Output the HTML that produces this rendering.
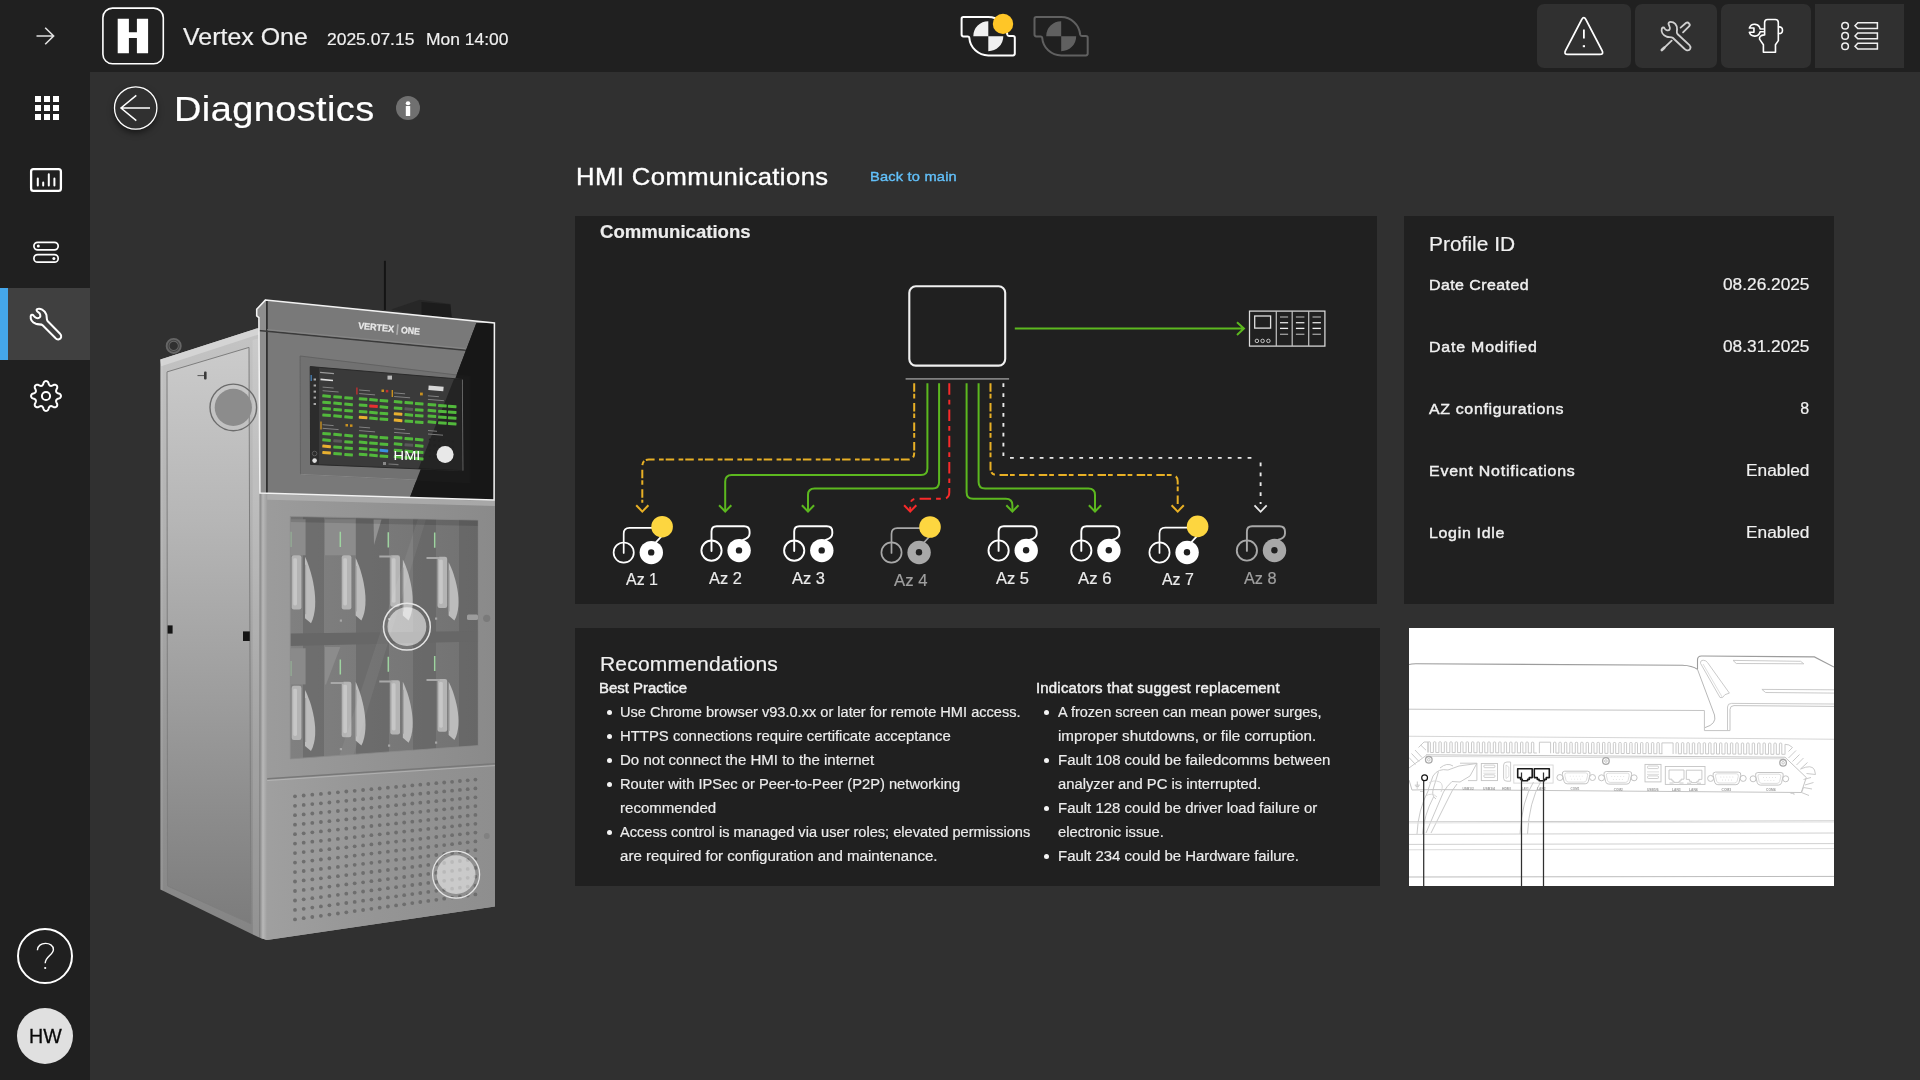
<!DOCTYPE html>
<html><head><meta charset="utf-8"><title>Diagnostics</title>
<style>
html,body{margin:0;padding:0;}
body{width:1920px;height:1080px;overflow:hidden;background:#303030;font-family:"Liberation Sans",sans-serif;position:relative;}
.t{position:absolute;white-space:pre;line-height:1;transform-origin:0 0;-webkit-text-stroke:0.18px currentColor;font-family:"Liberation Sans",sans-serif;}
.abs{position:absolute;}
#side{left:0;top:0;width:90px;height:1080px;background:#202020;}
#top{left:90px;top:0;width:1830px;height:72px;background:#202020;}
.panel{position:absolute;background:#202020;}
svg{position:absolute;overflow:visible;}
.bul{position:absolute;width:5.6px;height:5.6px;border-radius:50%;background:#f4f4f4;}
</style></head><body>
<div id="side" class="abs"></div>
<div id="top" class="abs"></div>
<div class="panel" style="left:575px;top:216px;width:802px;height:388px;"></div>
<div class="panel" style="left:1404px;top:216px;width:430px;height:388px;"></div>
<div class="panel" style="left:575px;top:628px;width:805px;height:258px;"></div>
<div class="abs" style="left:1409px;top:628px;width:425px;height:258px;background:#ffffff;"></div>

<div class="abs" style="left:0;top:288px;width:90px;height:72px;background:#404040;"></div>
<div class="abs" style="left:0;top:288px;width:8px;height:72px;background:#45a7ea;"></div>
<svg width="90" height="1080" style="left:0;top:0" viewBox="0 0 90 1080" fill="none" stroke="#ffffff" stroke-linecap="round" stroke-linejoin="round">
<!-- expand arrow -->
<path d="M36.5 36 H53.5 M45.2 27.8 L53.6 36 L45.2 44.2" stroke="#e0e0e0" stroke-width="1.6" stroke-linecap="butt" stroke-linejoin="miter"/>
<!-- grid -->
<g fill="#ffffff" stroke="none">
<rect x="35" y="96" width="6" height="6"/><rect x="44" y="96" width="6" height="6"/><rect x="53" y="96" width="6" height="6"/>
<rect x="35" y="105" width="6" height="6"/><rect x="44" y="105" width="6" height="6"/><rect x="53" y="105" width="6" height="6"/>
<rect x="35" y="114" width="6" height="6"/><rect x="44" y="114" width="6" height="6"/><rect x="53" y="114" width="6" height="6"/>
</g>
<!-- chart -->
<rect x="31.1" y="169.2" width="29.8" height="21.7" rx="2.4" stroke-width="2.3"/>
<path d="M37.8 178.6 V185.6 M43.2 182.6 V185.6 M48.8 174.2 V185.6 M54.4 178.6 V185.6" stroke-width="2"/>
<!-- toggles -->
<rect x="33.9" y="242.3" width="24.3" height="7.6" rx="3.8" stroke-width="1.7"/>
<rect x="33.9" y="254.6" width="24.3" height="7.6" rx="3.8" stroke-width="1.7"/>
<circle cx="38.3" cy="246.1" r="1.5" fill="#fff" stroke="none"/><circle cx="53.9" cy="258.4" r="1.5" fill="#fff" stroke="none"/>
<!-- wrench -->
<g transform="translate(20,298) scale(0.048148)">
<path d="M352 232 C420 205 510 250 545 340 C562 385 545 440 572 478 L832 742 C872 782 860 842 810 858 C780 868 752 852 735 832 L470 565 C440 540 380 555 330 535 C260 505 215 440 222 380 C225 345 262 335 282 365 C310 405 360 440 405 405 C440 375 420 325 385 300 C355 278 330 250 352 232 Z" stroke-width="42"/>
</g>
<!-- gear -->
<path d="M46.00 381.05 L46.58 381.13 L47.15 381.36 L47.69 381.76 L48.17 382.31 L48.54 383.25 L48.83 384.19 L49.16 384.78 L49.50 385.24 L49.85 385.57 L50.23 385.79 L50.65 385.90 L51.14 385.91 L51.70 385.83 L52.34 385.65 L53.22 385.19 L54.14 384.79 L54.88 384.74 L55.53 384.84 L56.10 385.07 L56.57 385.43 L56.93 385.90 L57.16 386.47 L57.26 387.12 L57.21 387.86 L56.81 388.78 L56.35 389.66 L56.17 390.30 L56.09 390.86 L56.10 391.35 L56.21 391.77 L56.43 392.15 L56.76 392.50 L57.22 392.84 L57.81 393.17 L58.75 393.46 L59.69 393.83 L60.24 394.31 L60.64 394.85 L60.87 395.42 L60.95 396.00 L60.87 396.58 L60.64 397.15 L60.24 397.69 L59.69 398.17 L58.75 398.54 L57.81 398.83 L57.22 399.16 L56.76 399.50 L56.43 399.85 L56.21 400.23 L56.10 400.65 L56.09 401.14 L56.17 401.70 L56.35 402.34 L56.81 403.22 L57.21 404.14 L57.26 404.88 L57.16 405.53 L56.93 406.10 L56.57 406.57 L56.10 406.93 L55.53 407.16 L54.88 407.26 L54.14 407.21 L53.22 406.81 L52.34 406.35 L51.70 406.17 L51.14 406.09 L50.65 406.10 L50.23 406.21 L49.85 406.43 L49.50 406.76 L49.16 407.22 L48.83 407.81 L48.54 408.75 L48.17 409.69 L47.69 410.24 L47.15 410.64 L46.58 410.87 L46.00 410.95 L45.42 410.87 L44.85 410.64 L44.31 410.24 L43.83 409.69 L43.46 408.75 L43.17 407.81 L42.84 407.22 L42.50 406.76 L42.15 406.43 L41.77 406.21 L41.35 406.10 L40.86 406.09 L40.30 406.17 L39.66 406.35 L38.78 406.81 L37.86 407.21 L37.12 407.26 L36.47 407.16 L35.90 406.93 L35.43 406.57 L35.07 406.10 L34.84 405.53 L34.74 404.88 L34.79 404.14 L35.19 403.22 L35.65 402.34 L35.83 401.70 L35.91 401.14 L35.90 400.65 L35.79 400.23 L35.57 399.85 L35.24 399.50 L34.78 399.16 L34.19 398.83 L33.25 398.54 L32.31 398.17 L31.76 397.69 L31.36 397.15 L31.13 396.58 L31.05 396.00 L31.13 395.42 L31.36 394.85 L31.76 394.31 L32.31 393.83 L33.25 393.46 L34.19 393.17 L34.78 392.84 L35.24 392.50 L35.57 392.15 L35.79 391.77 L35.90 391.35 L35.91 390.86 L35.83 390.30 L35.65 389.66 L35.19 388.78 L34.79 387.86 L34.74 387.12 L34.84 386.47 L35.07 385.90 L35.43 385.43 L35.90 385.07 L36.47 384.84 L37.12 384.74 L37.86 384.79 L38.78 385.19 L39.66 385.65 L40.30 385.83 L40.86 385.91 L41.35 385.90 L41.77 385.79 L42.15 385.57 L42.50 385.24 L42.84 384.78 L43.17 384.19 L43.46 383.25 L43.83 382.31 L44.31 381.76 L44.85 381.36 L45.42 381.13 Z" stroke-width="2"/>
<circle cx="46" cy="396" r="4.1" stroke-width="2"/>
<!-- help -->
<circle cx="45" cy="956" r="27" stroke-width="2"/>
<path d="M37.4 950.2 C37.4 941.2 53.4 941.2 53.4 949.6 C53.4 955 45.2 956.5 45.2 963.3" stroke-width="1.4" stroke-linecap="butt"/>
<circle cx="45.2" cy="968" r="1.1" fill="#fff" stroke="none"/>
<!-- avatar -->
<circle cx="45" cy="1036" r="28" fill="#e0e0e0" stroke="none"/>
</svg>

<!-- logo -->
<svg width="1920" height="72" style="left:0;top:0" viewBox="0 0 1920 72" fill="none" stroke-linecap="round" stroke-linejoin="round">
<rect x="102.9" y="8.1" width="60.4" height="55.7" rx="9.6" stroke="#ffffff" stroke-width="1.6"/>
<path d="M117.7 18.8 H128.9 V32.3 H136.9 V18.8 H148.1 V53.3 H136.9 V38 H128.9 V53.3 H117.7 Z" fill="#ffffff"/>
<!-- status icon 1 -->
<g id="st1">
<path d="M963.4 17.1 H988.3 A19.1 19.1 0 0 1 1007.3 34.7 Q1007.5 36 1009 36 H1013 Q1014.8 36 1014.8 37.8 V53.6 Q1014.8 55.4 1013 55.4 H988.3 A19.1 19.1 0 0 1 969.3 37.7 Q969.1 36.4 967.7 36.4 H963.4 Q961.6 36.4 961.6 34.6 V18.9 Q961.6 17.1 963.4 17.1 Z" stroke="#ffffff" stroke-width="2"/>
<path d="M988.3 36.2 V21.2 A15 15 0 0 0 973.3 36.2 Z M988.3 36.2 V51.2 A15 15 0 0 0 1003.3 36.2 Z" fill="#f0f0f0"/>
<circle cx="1003" cy="23.9" r="10.2" fill="#ffc627"/>
</g>
<g id="st2" transform="translate(72.9,0)">
<path d="M963.4 17.1 H988.3 A19.1 19.1 0 0 1 1007.3 34.7 Q1007.5 36 1009 36 H1013 Q1014.8 36 1014.8 37.8 V53.6 Q1014.8 55.4 1013 55.4 H988.3 A19.1 19.1 0 0 1 969.3 37.7 Q969.1 36.4 967.7 36.4 H963.4 Q961.6 36.4 961.6 34.6 V18.9 Q961.6 17.1 963.4 17.1 Z" stroke="#606060" stroke-width="2"/>
<path d="M988.3 36.2 V21.2 A15 15 0 0 0 973.3 36.2 Z M988.3 36.2 V51.2 A15 15 0 0 0 1003.3 36.2 Z" fill="#606060"/>
</g>
<!-- buttons -->
<rect x="1537" y="4" width="94" height="64" rx="7" fill="#303030"/>
<rect x="1635" y="4" width="82" height="64" rx="7" fill="#303030"/>
<rect x="1721" y="4" width="90" height="64" rx="7" fill="#303030"/>
<rect x="1815" y="4" width="89" height="64" fill="#303030"/>
<!-- alert triangle -->
<path d="M1581.8 19.4 Q1583.8 15.7 1585.8 19.4 L1602.1 50.7 Q1604 54.4 1599.8 54.4 L1567.8 54.4 Q1563.6 54.4 1565.5 50.7 Z" stroke="#ffffff" stroke-width="1.8"/>
<path d="M1583.9 29.6 V38.6" stroke="#ffffff" stroke-width="1.8" stroke-linecap="butt"/>
<rect x="1582.8" y="45.2" width="2.2" height="2" fill="#ffffff"/>
<!-- tools -->
<g transform="translate(1530,0) scale(0.101564)" stroke="#d0d0d0" stroke-width="18">
<path d="M1385 215 C1420 215 1450 245 1448 290 C1447 310 1440 320 1452 335 L1570 445 C1592 467 1575 502 1545 495 C1530 492 1525 485 1515 475 L1405 372 C1390 360 1365 370 1345 360 C1305 345 1290 310 1298 280 C1305 268 1320 268 1325 280 C1335 300 1365 305 1375 290 C1385 275 1370 255 1365 240 C1360 225 1370 215 1385 215 Z"/>
<path d="M1483 272 L1535 226 Q1552 214 1567 232 Q1580 246 1566 260 L1507 318"/>
<path d="M1395 400 L1318 474"/>
<path d="M1322 470 L1298 493" stroke-width="26"/>
</g>
<!-- hand with wrench -->
<g transform="translate(1725,0) scale(0.101564)" stroke="#ffffff" stroke-width="16" stroke-linejoin="round">
<path d="M390 345 V222 Q390 192 420 192 H495 Q525 192 525 222 V400 L497 440 V515 H378 V440 L340 385 Q335 350 385 343"/>
<path d="M528 265 Q566 262 566 297 Q566 332 528 330"/>
<path d="M378 285 H346 A55 55 0 0 0 240 276 H285 V318 H240 A55 55 0 0 0 346 312 H378"/>
</g>
<!-- list -->
<g stroke="#f0f0f0" stroke-width="1.5">
<circle cx="1845.1" cy="25.7" r="3.3"/><circle cx="1845.1" cy="35.9" r="3.3"/><circle cx="1845.1" cy="46.2" r="3.3"/>
<path d="M1855 25.7 L1857.8 22.8 H1877.4 V28.6 H1857.8 Z M1855 35.9 L1857.8 33 H1877.4 V38.8 H1857.8 Z M1855 46.2 L1857.8 43.3 H1877.4 V49.1 H1857.8 Z" stroke-linejoin="miter"/>
</g>
</svg>

<!-- back button -->
<div class="abs" style="left:114px;top:86.3px;width:43.4px;height:43.4px;border-radius:50%;box-shadow:0 3px 6px rgba(0,0,0,0.5);"></div>
<svg width="60" height="60" style="left:106px;top:78px" viewBox="106 78 60 60" fill="none" stroke="#ffffff" stroke-width="1.5">
<circle cx="135.7" cy="108" r="21.2" stroke-width="1.3"/><path d="M121 108 H150 M136.3 95.4 L121 108 L136.3 120.6"/>
</svg>
<!-- info -->
<svg width="30" height="30" style="left:393px;top:93px" viewBox="393 93 30 30">
<circle cx="408" cy="108" r="12" fill="#707070"/>
<ellipse cx="408" cy="103.2" rx="2.25" ry="1.95" fill="#ffffff"/>
<rect x="405.8" y="106.1" width="4.4" height="10" rx="0.5" fill="#ffffff"/>
</svg>
<!-- bullets -->
<div class="bul" style="left:606.6px;top:709.7px"></div>
<div class="bul" style="left:606.6px;top:733.7px"></div>
<div class="bul" style="left:606.6px;top:757.7px"></div>
<div class="bul" style="left:606.6px;top:781.7px"></div>
<div class="bul" style="left:606.6px;top:829.7px"></div>
<div class="bul" style="left:1043.6px;top:709.7px"></div>
<div class="bul" style="left:1043.6px;top:757.7px"></div>
<div class="bul" style="left:1043.6px;top:805.7px"></div>
<div class="bul" style="left:1043.6px;top:853.7px"></div>

<svg width="1920" height="1080" style="left:0;top:0" viewBox="0 0 1920 1080" fill="none">
<rect x="909.3" y="286.3" width="95.9" height="79.3" rx="6.5" stroke="#f0f0f0" stroke-width="2.1"/>
<path d="M905.6 378.9 H1009.1" stroke="#808080" stroke-width="1.7"/>
<path d="M1014.8 328.6 H1243.4 M1237 322.3 L1243.9 328.6 L1237 334.9" stroke="#5cb81f" stroke-width="2" stroke-linejoin="miter"/>
<g stroke="#e0e0e0">
<rect x="1249.5" y="311.1" width="75.4" height="35" stroke-width="1.25" stroke="#dcdcdc"/>
<path d="M1276.3 311.1 V346.1 M1292.2 311.1 V346.1 M1308.7 311.1 V346.1" stroke-width="1.25" stroke="#bebebe"/>
<rect x="1254.7" y="316" width="15.9" height="12.1" stroke-width="1.3"/>
<circle cx="1256.9" cy="340.9" r="1.75" stroke-width="0.85"/>
<circle cx="1262.6" cy="340.9" r="1.75" stroke-width="0.85"/>
<circle cx="1268.4" cy="340.9" r="1.75" stroke-width="0.85"/>
<path d="M1280 317 H1288.1" stroke="#a0a0a0" stroke-width="1.3"/>
<path d="M1280 322.7 H1288.1" stroke="#e0e0e0" stroke-width="1.3"/>
<path d="M1280 328.4 H1288.1" stroke="#f0f0f0" stroke-width="1.3"/>
<path d="M1280 334.3 H1288.1" stroke="#a0a0a0" stroke-width="1.3"/>
<path d="M1295.9 317 H1304.4" stroke="#a0a0a0" stroke-width="1.3"/>
<path d="M1295.9 322.7 H1304.4" stroke="#e0e0e0" stroke-width="1.3"/>
<path d="M1295.9 328.4 H1304.4" stroke="#f0f0f0" stroke-width="1.3"/>
<path d="M1295.9 334.3 H1304.4" stroke="#a0a0a0" stroke-width="1.3"/>
<path d="M1312.5 317 H1320.9" stroke="#a0a0a0" stroke-width="1.3"/>
<path d="M1312.5 322.7 H1320.9" stroke="#e0e0e0" stroke-width="1.3"/>
<path d="M1312.5 328.4 H1320.9" stroke="#f0f0f0" stroke-width="1.3"/>
<path d="M1312.5 334.3 H1320.9" stroke="#a0a0a0" stroke-width="1.3"/>
</g>
<path d="M914.2 383.3 V453.1 Q914.2 459.6 907.7 459.6 H648.8 Q642.3 459.6 642.3 466.1 V502.8" stroke="#e8b025" stroke-width="2" stroke-dasharray="8.5 2 4.7 4.4"/>
<path d="M636.2 505.2 L642.3 511.6 L648.4 505.2" stroke="#e8b025" stroke-width="2"/>
<path d="M927.4 383.3 V468.5 Q927.4 475 920.9 475 H731.7 Q725.2 475 725.2 481.5 V511" stroke="#5cb81f" stroke-width="2"/>
<path d="M719.1 505.2 L725.2 511.6 L731.3 505.2" stroke="#5cb81f" stroke-width="2"/>
<path d="M939.1 383.3 V482.1 Q939.1 488.6 932.6 488.6 H814.5 Q808 488.6 808 495.1 V511" stroke="#5cb81f" stroke-width="2"/>
<path d="M801.9 505.2 L808.0 511.6 L814.1 505.2" stroke="#5cb81f" stroke-width="2"/>
<path d="M949.3 383.3 V492.3 Q949.3 498.8 942.8 498.8 H916.7 Q910.2 498.8 910.2 505.3 V511" stroke="#f82a2a" stroke-width="2" stroke-dasharray="11.5 5 4.7 5"/>
<path d="M904.1 505.2 L910.2 511.6 L916.3 505.2" stroke="#f82a2a" stroke-width="2"/>
<path d="M966.6 383.3 V492.3 Q966.6 498.8 973.1 498.8 H1005.9 Q1012.4 498.8 1012.4 505.3 V511" stroke="#5cb81f" stroke-width="2"/>
<path d="M1006.3 505.2 L1012.4 511.6 L1018.5 505.2" stroke="#5cb81f" stroke-width="2"/>
<path d="M978.6 383.3 V482.1 Q978.6 488.6 985.1 488.6 H1088.5 Q1095 488.6 1095 495.1 V511" stroke="#5cb81f" stroke-width="2"/>
<path d="M1088.9 505.2 L1095.0 511.6 L1101.1 505.2" stroke="#5cb81f" stroke-width="2"/>
<path d="M990.5 383.3 V468.5 Q990.5 475 997.0 475 H1171.2 Q1177.7 475 1177.7 481.5 V505" stroke="#e8b025" stroke-width="2" stroke-dasharray="8.5 2 4.7 4.4"/>
<path d="M1171.6 505.2 L1177.7 511.6 L1183.8 505.2" stroke="#e8b025" stroke-width="2"/>
<path d="M1003.4 383.3 V456 M1010 457.9 H1257 M1260.6 462.5 V504" stroke="#e8e8e8" stroke-width="1.9" stroke-dasharray="3.8 6.1"/>
<path d="M1254.5 505.4 L1260.6 511.8 L1266.7 505.4" stroke="#e8e8e8" stroke-width="1.8"/>
<g stroke="#ffffff" fill="none" stroke-width="1.7" stroke-linecap="round"><circle cx="623.7" cy="552.6" r="10.1"/><path d="M623.7 553.0 V533.7 Q623.7 527.9 629.5 527.9 H662.1"/><path d="M662.1 535.7 L656.1 542.2"/></g><circle cx="651.3" cy="552.6" r="11.7" fill="#ffffff"/><circle cx="651.2" cy="552.4" r="3.2" fill="#202020"/><circle cx="662.1" cy="526.7" r="10.8" fill="#fdd640"/>
<g stroke="#ffffff" fill="none" stroke-width="1.9" stroke-linecap="round"><circle cx="711.5" cy="550.6" r="10.1"/><path d="M711.5 551.0 V531.5 Q711.5 526.3 716.7 526.3 H744.1 Q749.6 526.3 749.6 531.8 V533.6 Q749.6 538.2 743.0 539.8"/></g><circle cx="739.1" cy="550.6" r="11.7" fill="#ffffff"/><circle cx="739.0" cy="550.4" r="3.2" fill="#202020"/>
<g stroke="#ffffff" fill="none" stroke-width="1.9" stroke-linecap="round"><circle cx="794.2" cy="550.6" r="10.1"/><path d="M794.2 551.0 V531.5 Q794.2 526.3 799.4 526.3 H826.8 Q832.3 526.3 832.3 531.8 V533.6 Q832.3 538.2 825.7 539.8"/></g><circle cx="821.8" cy="550.6" r="11.7" fill="#ffffff"/><circle cx="821.7" cy="550.4" r="3.2" fill="#202020"/>
<g stroke="#a8a8a8" fill="none" stroke-width="1.7" stroke-linecap="round"><circle cx="891.5" cy="552.5" r="10.1"/><path d="M891.5 552.9 V534.0 Q891.5 528.2 897.3 528.2 H930.0"/><path d="M930.0 536.0 L924.0 542.5"/></g><circle cx="919.1" cy="552.5" r="11.7" fill="#a8a8a8"/><circle cx="919.0" cy="552.3" r="3.2" fill="#202020"/><circle cx="930.0" cy="527.0" r="10.8" fill="#fdd640"/>
<g stroke="#ffffff" fill="none" stroke-width="1.9" stroke-linecap="round"><circle cx="998.6" cy="550.5" r="10.1"/><path d="M998.6 550.9 V531.4 Q998.6 526.2 1003.8 526.2 H1031.2 Q1036.7 526.2 1036.7 531.7 V533.5 Q1036.7 538.1 1030.1 539.7"/></g><circle cx="1026.2" cy="550.5" r="11.7" fill="#ffffff"/><circle cx="1026.1" cy="550.3" r="3.2" fill="#202020"/>
<g stroke="#ffffff" fill="none" stroke-width="1.9" stroke-linecap="round"><circle cx="1081.3" cy="550.5" r="10.1"/><path d="M1081.3 550.9 V531.4 Q1081.3 526.2 1086.5 526.2 H1113.9 Q1119.4 526.2 1119.4 531.7 V533.5 Q1119.4 538.1 1112.8 539.7"/></g><circle cx="1108.9" cy="550.5" r="11.7" fill="#ffffff"/><circle cx="1108.8" cy="550.3" r="3.2" fill="#202020"/>
<g stroke="#ffffff" fill="none" stroke-width="1.7" stroke-linecap="round"><circle cx="1159.5" cy="552.5" r="10.1"/><path d="M1159.5 552.9 V533.4 Q1159.5 527.6 1165.3 527.6 H1197.6"/><path d="M1197.6 535.4 L1191.6 541.9"/></g><circle cx="1187.1" cy="552.5" r="11.7" fill="#ffffff"/><circle cx="1187.0" cy="552.3" r="3.2" fill="#202020"/><circle cx="1197.6" cy="526.4" r="10.8" fill="#fdd640"/>
<g stroke="#a8a8a8" fill="none" stroke-width="1.9" stroke-linecap="round"><circle cx="1246.9" cy="550.5" r="10.1"/><path d="M1246.9 550.9 V531.4 Q1246.9 526.2 1252.1 526.2 H1279.5 Q1285.0 526.2 1285.0 531.7 V533.5 Q1285.0 538.1 1278.4 539.7"/></g><circle cx="1274.5" cy="550.5" r="11.7" fill="#a8a8a8"/><circle cx="1274.4" cy="550.3" r="3.2" fill="#202020"/>
</svg>
<svg width="1920" height="1080" style="left:0;top:0" viewBox="0 0 1920 1080">
<defs>
<linearGradient id="gSide" x1="0" y1="0" x2="0" y2="1"><stop offset="0" stop-color="#cbcbcb"/><stop offset="0.3" stop-color="#b6b6b6"/><stop offset="0.62" stop-color="#9c9c9c"/><stop offset="1" stop-color="#7c7c7c"/></linearGradient>
<linearGradient id="gFrame" x1="0" y1="0" x2="0" y2="1"><stop offset="0" stop-color="#c4c4c4"/><stop offset="0.35" stop-color="#b0b0b0"/><stop offset="0.65" stop-color="#999999"/><stop offset="1" stop-color="#848484"/></linearGradient>
<linearGradient id="gEdge" x1="0" y1="0" x2="1" y2="0"><stop offset="0" stop-color="#8a8a8a"/><stop offset="0.4" stop-color="#b8b8b8"/><stop offset="1" stop-color="#9e9e9e"/></linearGradient>
<linearGradient id="gDoor" x1="0" y1="0" x2="1" y2="0"><stop offset="0" stop-color="#9c9c9c"/><stop offset="0.5" stop-color="#939393"/><stop offset="1" stop-color="#8a8a8a"/></linearGradient>
<linearGradient id="gLow" x1="0" y1="0" x2="1" y2="0"><stop offset="0" stop-color="#a0a0a0"/><stop offset="0.5" stop-color="#959595"/><stop offset="1" stop-color="#8e8e8e"/></linearGradient>
<linearGradient id="gWin" x1="0" y1="0" x2="1" y2="0"><stop offset="0" stop-color="#808080"/><stop offset="1" stop-color="#727272"/></linearGradient>
<clipPath id="cScreen"><polygon points="310.2,366.6 462,379.3 462.6,470.7 310.6,464.4"/></clipPath>
<clipPath id="cWin"><polygon points="290.3,516.4 478.3,520 478.3,745.6 290.3,758.9"/></clipPath>
<clipPath id="cHead"><polygon points="265.5,299.9 494.8,322.9 494.1,500 259.7,493.1 258.9,317.6 256.5,315.9 256.5,309"/></clipPath>
</defs>
<path d="M384.9 260.8 V310" stroke="#141414" stroke-width="2"/>
<polygon points="391.1,309.4 419.8,299.7 450.4,303.9 451.8,318.9 421,315" fill="#272727"/>
<polygon points="421.5,302 450.4,304.6 451.8,318.9 421.5,316" fill="#1c1c1c"/>
<circle cx="173.7" cy="345.9" r="6.1" fill="none" stroke="#666666" stroke-width="3.8"/>
<circle cx="173.7" cy="345.9" r="5.6" fill="none" stroke="#444444" stroke-width="1.1"/>
<polygon points="160.4,359.5 257.6,328.2 259.8,328 259.8,937.8 160.4,889.6" fill="url(#gFrame)"/>
<polygon points="160.4,359.5 257.6,328.2 258.8,334.4 161.2,366.2" fill="#d4d4d4"/>
<polygon points="160.4,359.5 162.6,358.8 162.8,890.6 160.4,889.6" fill="#ffffff" opacity="0.10"/>
<polygon points="167,371.9 249,347.4 250.8,923.7 167.5,885.9" fill="url(#gSide)" stroke="#7e7e7e" stroke-width="1"/>
<polygon points="252.5,340 259.8,338 259.8,937.8 252.8,934.6" fill="#ffffff" opacity="0.12"/>
<rect x="167.6" y="625.4" width="5" height="8.2" fill="#151515"/>
<rect x="243" y="631.4" width="6.8" height="9.6" fill="#151515"/>
<path d="M197.5 375.6 H204" stroke="#555" stroke-width="1"/><rect x="204" y="371.6" width="2.6" height="8" rx="1" fill="#3a3a3a"/>
<circle cx="233.3" cy="407.4" r="23.3" fill="none" stroke="#6c6c6c" stroke-width="1.4"/>
<circle cx="233.3" cy="407.4" r="18.6" fill="#8c8c8c"/>
<polygon points="260.2,493 494.9,500 494.9,906.6 267,940 260.2,937.8" fill="#9a9a9a"/>
<polygon points="260.5,494 494.9,501 494.9,763.6 260.5,778.9" fill="url(#gDoor)"/>
<polygon points="260.5,494 494.9,501 494.9,506 260.5,499.5" fill="#b4b4b4" opacity="0.7"/>
<polygon points="290.3,516.4 478.3,520 478.3,745.6 290.3,758.9" fill="url(#gWin)"/>
<g clip-path="url(#cWin)">
<rect x="303" y="516" width="21" height="245" fill="#5c5c5c" opacity="0.45"/>
<rect x="356" y="516" width="17" height="245" fill="#5c5c5c" opacity="0.45"/>
<rect x="373" y="516" width="16" height="245" fill="#5c5c5c" opacity="0.45"/>
<rect x="413" y="516" width="23" height="245" fill="#5c5c5c" opacity="0.45"/>
<rect x="459" y="516" width="19" height="245" fill="#5c5c5c" opacity="0.45"/>
<rect x="290.3" y="519.2" width="15.3" height="36.1" fill="#8c8c8c"/>
<rect x="325" y="519.2" width="30.6" height="36.1" fill="#8c8c8c"/>
<rect x="290.3" y="648.3" width="15.3" height="36.1" fill="#8a8a8a"/>
<polygon points="325,647 340.3,647 326,684.4 325,684.4" fill="#8c8c8c"/>
<polygon points="373.6,519.5 381.5,519.6 374,545" fill="#929292"/>
<rect x="291.7" y="555.3" width="9.7" height="54.1" rx="2.2" fill="#b4b4b4"/><rect x="293.3" y="558.3" width="3.7" height="47.1" rx="1.4" fill="#cfcfcf" opacity="0.7"/>
<path d="M305.0 556.7 C311.0 568.7 321.0 603.3 311.0 623.3 L305.0 618.3 Z" fill="#bcbcbc"/><path d="M305.6 564.7 V614.3" stroke="#9a9a9a" stroke-width="1.2" opacity="0.7"/>
<rect x="341.7" y="555.3" width="9.7" height="54.1" rx="2.2" fill="#b4b4b4"/><rect x="343.3" y="558.3" width="3.7" height="47.1" rx="1.4" fill="#cfcfcf" opacity="0.7"/>
<path d="M355.6 558.0 C361.4 569.2 371.1 601.8 361.4 620.5 L355.6 615.5 Z" fill="#bcbcbc"/><path d="M356.2 566.0 V611.5" stroke="#9a9a9a" stroke-width="1.2" opacity="0.7"/>
<rect x="390.3" y="555.3" width="9.7" height="51.4" rx="2.2" fill="#b4b4b4"/><rect x="391.9" y="558.3" width="3.7" height="44.4" rx="1.4" fill="#cfcfcf" opacity="0.7"/><path d="M379.3 556.5 H392.3" stroke="#a8a8a8" stroke-width="2"/>
<path d="M402.8 559.4 C408.6 570.4 418.3 602.2 408.6 620.6 L402.8 615.6 Z" fill="#bcbcbc"/><path d="M403.4 567.4 V611.6" stroke="#9a9a9a" stroke-width="1.2" opacity="0.7"/>
<rect x="437.5" y="556.7" width="9.7" height="51.3" rx="2.2" fill="#b4b4b4"/><rect x="439.1" y="559.7" width="3.7" height="44.3" rx="1.4" fill="#cfcfcf" opacity="0.7"/><path d="M426.5 557.9 H439.5" stroke="#a8a8a8" stroke-width="2"/>
<path d="M448.6 562.2 C454.4 572.7 464.1 603.1 454.4 620.6 L448.6 615.6 Z" fill="#bcbcbc"/><path d="M449.2 570.2 V611.6" stroke="#9a9a9a" stroke-width="1.2" opacity="0.7"/>
<rect x="291.7" y="685.8" width="9.7" height="54.2" rx="2.2" fill="#b4b4b4"/><rect x="293.3" y="688.8" width="3.7" height="47.2" rx="1.4" fill="#cfcfcf" opacity="0.7"/>
<path d="M305.0 690.0 C311.0 701.0 321.0 732.7 311.0 751.0 L305.0 746.0 Z" fill="#bcbcbc"/><path d="M305.6 698.0 V742.0" stroke="#9a9a9a" stroke-width="1.2" opacity="0.7"/>
<rect x="341.7" y="681.7" width="9.7" height="55.5" rx="2.2" fill="#b4b4b4"/><rect x="343.3" y="684.7" width="3.7" height="48.5" rx="1.4" fill="#cfcfcf" opacity="0.7"/><path d="M330.7 682.9 H343.7" stroke="#a8a8a8" stroke-width="2"/>
<path d="M355.6 681.7 C361.4 693.2 371.1 726.4 361.4 745.6 L355.6 740.6 Z" fill="#bcbcbc"/><path d="M356.2 689.7 V736.6" stroke="#9a9a9a" stroke-width="1.2" opacity="0.7"/>
<rect x="390.3" y="680.3" width="9.7" height="54.1" rx="2.2" fill="#b4b4b4"/><rect x="391.9" y="683.3" width="3.7" height="47.1" rx="1.4" fill="#cfcfcf" opacity="0.7"/><path d="M379.3 681.5 H392.3" stroke="#a8a8a8" stroke-width="2"/>
<path d="M402.8 681.7 C408.6 692.7 418.3 724.5 408.6 742.8 L402.8 737.8 Z" fill="#bcbcbc"/><path d="M403.4 689.7 V733.8" stroke="#9a9a9a" stroke-width="1.2" opacity="0.7"/>
<rect x="437.5" y="678.9" width="9.7" height="52.8" rx="2.2" fill="#b4b4b4"/><rect x="439.1" y="681.9" width="3.7" height="45.8" rx="1.4" fill="#cfcfcf" opacity="0.7"/><path d="M426.5 680.1 H439.5" stroke="#a8a8a8" stroke-width="2"/>
<path d="M448.6 681.7 C454.4 692.2 464.1 722.5 454.4 740.0 L448.6 735.0 Z" fill="#bcbcbc"/><path d="M449.2 689.7 V731.0" stroke="#9a9a9a" stroke-width="1.2" opacity="0.7"/>
<path d="M290.6 531.7 v15.3" stroke="#9ed3a0" stroke-width="1.5"/>
<path d="M340.3 531.7 v15.3" stroke="#9ed3a0" stroke-width="1.5"/>
<path d="M388.3 532.2 v15.3" stroke="#9ed3a0" stroke-width="1.5"/>
<path d="M434.7 532.5 v15.3" stroke="#9ed3a0" stroke-width="1.5"/>
<path d="M290.6 661 v15" stroke="#9ed3a0" stroke-width="1.5"/>
<path d="M340.3 659.4 v15" stroke="#9ed3a0" stroke-width="1.5"/>
<path d="M388.3 656.7 v15" stroke="#9ed3a0" stroke-width="1.5"/>
<path d="M434.7 656 v15" stroke="#9ed3a0" stroke-width="1.5"/>
<rect x="339.8" y="619.5" width="2.2" height="2.2" fill="#a6a6a6"/>
<rect x="388" y="618" width="2.2" height="2.2" fill="#a6a6a6"/>
<rect x="435" y="617.5" width="2.2" height="2.2" fill="#a6a6a6"/>
<rect x="339.8" y="748" width="2.2" height="2.2" fill="#a6a6a6"/>
<rect x="388" y="744.5" width="2.2" height="2.2" fill="#a6a6a6"/>
<rect x="435" y="741.5" width="2.2" height="2.2" fill="#a6a6a6"/>
<polygon points="290,633.5 478.3,631 478.3,641.5 290,646" fill="#676767"/>
<polygon points="418,519 426,519.3 352,760 338,760" fill="#ffffff" opacity="0.06"/>
<polygon points="290,516 478.3,520 478.3,526 290,522" fill="#000" opacity="0.12"/>
</g>
<polygon points="290.3,516.4 478.3,520 478.3,745.6 290.3,758.9" fill="none" stroke="#8a8a8a" stroke-width="0.8"/>
<circle cx="486.7" cy="618.3" r="3.6" fill="#7a7a7a"/><rect x="467" y="614.5" width="11" height="5.5" rx="1.5" fill="#9c9c9c"/>
<polygon points="260.5,779.6 494.9,764 494.9,906.6 267,940 260.5,938" fill="url(#gLow)"/>
<path d="M260.5 779.2 L494.9 763.8" stroke="#787878" stroke-width="1.6"/>
<path d="M260.5 781 L494.9 765.6" stroke="#c2c2c2" stroke-width="1" opacity="0.6"/>
<g fill="#6e6e6e"><circle cx="295.0" cy="796.3" r="1.9"/><circle cx="295.0" cy="805.8" r="1.9"/><circle cx="295.0" cy="815.2" r="1.9"/><circle cx="295.0" cy="824.7" r="1.9"/><circle cx="295.0" cy="834.2" r="1.9"/><circle cx="295.0" cy="843.6" r="1.9"/><circle cx="295.0" cy="853.1" r="1.9"/><circle cx="295.0" cy="862.6" r="1.9"/><circle cx="295.0" cy="872.1" r="1.9"/><circle cx="295.0" cy="881.5" r="1.9"/><circle cx="295.0" cy="891.0" r="1.9"/><circle cx="295.0" cy="900.5" r="1.9"/><circle cx="295.0" cy="909.9" r="1.9"/><circle cx="295.0" cy="919.4" r="1.9"/><circle cx="303.7" cy="795.5" r="1.9"/><circle cx="303.7" cy="804.9" r="1.9"/><circle cx="303.7" cy="814.4" r="1.9"/><circle cx="303.7" cy="823.8" r="1.9"/><circle cx="303.7" cy="833.3" r="1.9"/><circle cx="303.7" cy="842.7" r="1.9"/><circle cx="303.7" cy="852.1" r="1.9"/><circle cx="303.7" cy="861.6" r="1.9"/><circle cx="303.7" cy="871.0" r="1.9"/><circle cx="303.7" cy="880.4" r="1.9"/><circle cx="303.7" cy="889.9" r="1.9"/><circle cx="303.7" cy="899.3" r="1.9"/><circle cx="303.7" cy="908.8" r="1.9"/><circle cx="303.7" cy="918.2" r="1.9"/><circle cx="312.3" cy="794.7" r="1.9"/><circle cx="312.3" cy="804.1" r="1.9"/><circle cx="312.3" cy="813.5" r="1.9"/><circle cx="312.3" cy="822.9" r="1.9"/><circle cx="312.3" cy="832.3" r="1.9"/><circle cx="312.3" cy="841.7" r="1.9"/><circle cx="312.3" cy="851.1" r="1.9"/><circle cx="312.3" cy="860.6" r="1.9"/><circle cx="312.3" cy="870.0" r="1.9"/><circle cx="312.3" cy="879.4" r="1.9"/><circle cx="312.3" cy="888.8" r="1.9"/><circle cx="312.3" cy="898.2" r="1.9"/><circle cx="312.3" cy="907.6" r="1.9"/><circle cx="312.3" cy="917.0" r="1.9"/><circle cx="320.9" cy="793.9" r="1.9"/><circle cx="320.9" cy="803.3" r="1.9"/><circle cx="320.9" cy="812.7" r="1.9"/><circle cx="320.9" cy="822.0" r="1.9"/><circle cx="320.9" cy="831.4" r="1.9"/><circle cx="320.9" cy="840.8" r="1.9"/><circle cx="320.9" cy="850.2" r="1.9"/><circle cx="320.9" cy="859.5" r="1.9"/><circle cx="320.9" cy="868.9" r="1.9"/><circle cx="320.9" cy="878.3" r="1.9"/><circle cx="320.9" cy="887.7" r="1.9"/><circle cx="320.9" cy="897.1" r="1.9"/><circle cx="320.9" cy="906.4" r="1.9"/><circle cx="320.9" cy="915.8" r="1.9"/><circle cx="329.4" cy="793.1" r="1.9"/><circle cx="329.4" cy="802.5" r="1.9"/><circle cx="329.4" cy="811.8" r="1.9"/><circle cx="329.4" cy="821.2" r="1.9"/><circle cx="329.4" cy="830.5" r="1.9"/><circle cx="329.4" cy="839.9" r="1.9"/><circle cx="329.4" cy="849.2" r="1.9"/><circle cx="329.4" cy="858.5" r="1.9"/><circle cx="329.4" cy="867.9" r="1.9"/><circle cx="329.4" cy="877.2" r="1.9"/><circle cx="329.4" cy="886.6" r="1.9"/><circle cx="329.4" cy="895.9" r="1.9"/><circle cx="329.4" cy="905.3" r="1.9"/><circle cx="329.4" cy="914.6" r="1.9"/><circle cx="337.9" cy="792.3" r="1.9"/><circle cx="337.9" cy="801.6" r="1.9"/><circle cx="337.9" cy="811.0" r="1.9"/><circle cx="337.9" cy="820.3" r="1.9"/><circle cx="337.9" cy="829.6" r="1.9"/><circle cx="337.9" cy="838.9" r="1.9"/><circle cx="337.9" cy="848.2" r="1.9"/><circle cx="337.9" cy="857.6" r="1.9"/><circle cx="337.9" cy="866.9" r="1.9"/><circle cx="337.9" cy="876.2" r="1.9"/><circle cx="337.9" cy="885.5" r="1.9"/><circle cx="337.9" cy="894.8" r="1.9"/><circle cx="337.9" cy="904.1" r="1.9"/><circle cx="337.9" cy="913.5" r="1.9"/><circle cx="346.3" cy="791.5" r="1.9"/><circle cx="346.3" cy="800.8" r="1.9"/><circle cx="346.3" cy="810.1" r="1.9"/><circle cx="346.3" cy="819.4" r="1.9"/><circle cx="346.3" cy="828.7" r="1.9"/><circle cx="346.3" cy="838.0" r="1.9"/><circle cx="346.3" cy="847.3" r="1.9"/><circle cx="346.3" cy="856.6" r="1.9"/><circle cx="346.3" cy="865.8" r="1.9"/><circle cx="346.3" cy="875.1" r="1.9"/><circle cx="346.3" cy="884.4" r="1.9"/><circle cx="346.3" cy="893.7" r="1.9"/><circle cx="346.3" cy="903.0" r="1.9"/><circle cx="346.3" cy="912.3" r="1.9"/><circle cx="354.7" cy="790.8" r="1.9"/><circle cx="354.7" cy="800.0" r="1.9"/><circle cx="354.7" cy="809.3" r="1.9"/><circle cx="354.7" cy="818.5" r="1.9"/><circle cx="354.7" cy="827.8" r="1.9"/><circle cx="354.7" cy="837.1" r="1.9"/><circle cx="354.7" cy="846.3" r="1.9"/><circle cx="354.7" cy="855.6" r="1.9"/><circle cx="354.7" cy="864.8" r="1.9"/><circle cx="354.7" cy="874.1" r="1.9"/><circle cx="354.7" cy="883.3" r="1.9"/><circle cx="354.7" cy="892.6" r="1.9"/><circle cx="354.7" cy="901.9" r="1.9"/><circle cx="354.7" cy="911.1" r="1.9"/><circle cx="363.1" cy="790.0" r="1.9"/><circle cx="363.1" cy="799.2" r="1.9"/><circle cx="363.1" cy="808.5" r="1.9"/><circle cx="363.1" cy="817.7" r="1.9"/><circle cx="363.1" cy="826.9" r="1.9"/><circle cx="363.1" cy="836.1" r="1.9"/><circle cx="363.1" cy="845.4" r="1.9"/><circle cx="363.1" cy="854.6" r="1.9"/><circle cx="363.1" cy="863.8" r="1.9"/><circle cx="363.1" cy="873.0" r="1.9"/><circle cx="363.1" cy="882.3" r="1.9"/><circle cx="363.1" cy="891.5" r="1.9"/><circle cx="363.1" cy="900.7" r="1.9"/><circle cx="363.1" cy="910.0" r="1.9"/><circle cx="371.4" cy="789.2" r="1.9"/><circle cx="371.4" cy="798.4" r="1.9"/><circle cx="371.4" cy="807.6" r="1.9"/><circle cx="371.4" cy="816.8" r="1.9"/><circle cx="371.4" cy="826.0" r="1.9"/><circle cx="371.4" cy="835.2" r="1.9"/><circle cx="371.4" cy="844.4" r="1.9"/><circle cx="371.4" cy="853.6" r="1.9"/><circle cx="371.4" cy="862.8" r="1.9"/><circle cx="371.4" cy="872.0" r="1.9"/><circle cx="371.4" cy="881.2" r="1.9"/><circle cx="371.4" cy="890.4" r="1.9"/><circle cx="371.4" cy="899.6" r="1.9"/><circle cx="371.4" cy="908.8" r="1.9"/><circle cx="379.7" cy="788.5" r="1.9"/><circle cx="379.7" cy="797.6" r="1.9"/><circle cx="379.7" cy="806.8" r="1.9"/><circle cx="379.7" cy="816.0" r="1.9"/><circle cx="379.7" cy="825.1" r="1.9"/><circle cx="379.7" cy="834.3" r="1.9"/><circle cx="379.7" cy="843.5" r="1.9"/><circle cx="379.7" cy="852.6" r="1.9"/><circle cx="379.7" cy="861.8" r="1.9"/><circle cx="379.7" cy="871.0" r="1.9"/><circle cx="379.7" cy="880.2" r="1.9"/><circle cx="379.7" cy="889.3" r="1.9"/><circle cx="379.7" cy="898.5" r="1.9"/><circle cx="379.7" cy="907.7" r="1.9"/><circle cx="387.9" cy="787.7" r="1.9"/><circle cx="387.9" cy="796.8" r="1.9"/><circle cx="387.9" cy="806.0" r="1.9"/><circle cx="387.9" cy="815.1" r="1.9"/><circle cx="387.9" cy="824.3" r="1.9"/><circle cx="387.9" cy="833.4" r="1.9"/><circle cx="387.9" cy="842.5" r="1.9"/><circle cx="387.9" cy="851.7" r="1.9"/><circle cx="387.9" cy="860.8" r="1.9"/><circle cx="387.9" cy="870.0" r="1.9"/><circle cx="387.9" cy="879.1" r="1.9"/><circle cx="387.9" cy="888.2" r="1.9"/><circle cx="387.9" cy="897.4" r="1.9"/><circle cx="387.9" cy="906.5" r="1.9"/><circle cx="396.1" cy="786.9" r="1.9"/><circle cx="396.1" cy="796.1" r="1.9"/><circle cx="396.1" cy="805.2" r="1.9"/><circle cx="396.1" cy="814.3" r="1.9"/><circle cx="396.1" cy="823.4" r="1.9"/><circle cx="396.1" cy="832.5" r="1.9"/><circle cx="396.1" cy="841.6" r="1.9"/><circle cx="396.1" cy="850.7" r="1.9"/><circle cx="396.1" cy="859.8" r="1.9"/><circle cx="396.1" cy="868.9" r="1.9"/><circle cx="396.1" cy="878.1" r="1.9"/><circle cx="396.1" cy="887.2" r="1.9"/><circle cx="396.1" cy="896.3" r="1.9"/><circle cx="396.1" cy="905.4" r="1.9"/><circle cx="404.2" cy="786.2" r="1.9"/><circle cx="404.2" cy="795.3" r="1.9"/><circle cx="404.2" cy="804.4" r="1.9"/><circle cx="404.2" cy="813.4" r="1.9"/><circle cx="404.2" cy="822.5" r="1.9"/><circle cx="404.2" cy="831.6" r="1.9"/><circle cx="404.2" cy="840.7" r="1.9"/><circle cx="404.2" cy="849.8" r="1.9"/><circle cx="404.2" cy="858.9" r="1.9"/><circle cx="404.2" cy="867.9" r="1.9"/><circle cx="404.2" cy="877.0" r="1.9"/><circle cx="404.2" cy="886.1" r="1.9"/><circle cx="404.2" cy="895.2" r="1.9"/><circle cx="404.2" cy="904.3" r="1.9"/><circle cx="412.3" cy="785.4" r="1.9"/><circle cx="412.3" cy="794.5" r="1.9"/><circle cx="412.3" cy="803.5" r="1.9"/><circle cx="412.3" cy="812.6" r="1.9"/><circle cx="412.3" cy="821.7" r="1.9"/><circle cx="412.3" cy="830.7" r="1.9"/><circle cx="412.3" cy="839.8" r="1.9"/><circle cx="412.3" cy="848.8" r="1.9"/><circle cx="412.3" cy="857.9" r="1.9"/><circle cx="412.3" cy="866.9" r="1.9"/><circle cx="412.3" cy="876.0" r="1.9"/><circle cx="412.3" cy="885.0" r="1.9"/><circle cx="412.3" cy="894.1" r="1.9"/><circle cx="412.3" cy="903.1" r="1.9"/><circle cx="420.3" cy="784.7" r="1.9"/><circle cx="420.3" cy="793.7" r="1.9"/><circle cx="420.3" cy="802.7" r="1.9"/><circle cx="420.3" cy="811.8" r="1.9"/><circle cx="420.3" cy="820.8" r="1.9"/><circle cx="420.3" cy="829.8" r="1.9"/><circle cx="420.3" cy="838.8" r="1.9"/><circle cx="420.3" cy="847.9" r="1.9"/><circle cx="420.3" cy="856.9" r="1.9"/><circle cx="420.3" cy="865.9" r="1.9"/><circle cx="420.3" cy="875.0" r="1.9"/><circle cx="420.3" cy="884.0" r="1.9"/><circle cx="420.3" cy="893.0" r="1.9"/><circle cx="420.3" cy="902.0" r="1.9"/><circle cx="428.3" cy="784.0" r="1.9"/><circle cx="428.3" cy="793.0" r="1.9"/><circle cx="428.3" cy="802.0" r="1.9"/><circle cx="428.3" cy="810.9" r="1.9"/><circle cx="428.3" cy="819.9" r="1.9"/><circle cx="428.3" cy="828.9" r="1.9"/><circle cx="428.3" cy="837.9" r="1.9"/><circle cx="428.3" cy="846.9" r="1.9"/><circle cx="428.3" cy="855.9" r="1.9"/><circle cx="428.3" cy="864.9" r="1.9"/><circle cx="428.3" cy="873.9" r="1.9"/><circle cx="428.3" cy="882.9" r="1.9"/><circle cx="428.3" cy="891.9" r="1.9"/><circle cx="428.3" cy="900.9" r="1.9"/><circle cx="436.3" cy="783.2" r="1.9"/><circle cx="436.3" cy="792.2" r="1.9"/><circle cx="436.3" cy="801.2" r="1.9"/><circle cx="436.3" cy="810.1" r="1.9"/><circle cx="436.3" cy="819.1" r="1.9"/><circle cx="436.3" cy="828.1" r="1.9"/><circle cx="436.3" cy="837.0" r="1.9"/><circle cx="436.3" cy="846.0" r="1.9"/><circle cx="436.3" cy="855.0" r="1.9"/><circle cx="436.3" cy="863.9" r="1.9"/><circle cx="436.3" cy="872.9" r="1.9"/><circle cx="436.3" cy="881.9" r="1.9"/><circle cx="436.3" cy="890.8" r="1.9"/><circle cx="436.3" cy="899.8" r="1.9"/><circle cx="444.2" cy="782.5" r="1.9"/><circle cx="444.2" cy="791.4" r="1.9"/><circle cx="444.2" cy="800.4" r="1.9"/><circle cx="444.2" cy="809.3" r="1.9"/><circle cx="444.2" cy="818.3" r="1.9"/><circle cx="444.2" cy="827.2" r="1.9"/><circle cx="444.2" cy="836.1" r="1.9"/><circle cx="444.2" cy="845.1" r="1.9"/><circle cx="444.2" cy="854.0" r="1.9"/><circle cx="444.2" cy="863.0" r="1.9"/><circle cx="444.2" cy="871.9" r="1.9"/><circle cx="444.2" cy="880.8" r="1.9"/><circle cx="444.2" cy="889.8" r="1.9"/><circle cx="444.2" cy="898.7" r="1.9"/><circle cx="452.1" cy="781.8" r="1.9"/><circle cx="452.1" cy="790.7" r="1.9"/><circle cx="452.1" cy="799.6" r="1.9"/><circle cx="452.1" cy="808.5" r="1.9"/><circle cx="452.1" cy="817.4" r="1.9"/><circle cx="452.1" cy="826.3" r="1.9"/><circle cx="452.1" cy="835.2" r="1.9"/><circle cx="452.1" cy="844.2" r="1.9"/><circle cx="452.1" cy="853.1" r="1.9"/><circle cx="452.1" cy="862.0" r="1.9"/><circle cx="452.1" cy="870.9" r="1.9"/><circle cx="452.1" cy="879.8" r="1.9"/><circle cx="452.1" cy="888.7" r="1.9"/><circle cx="452.1" cy="897.6" r="1.9"/><circle cx="459.9" cy="781.0" r="1.9"/><circle cx="459.9" cy="789.9" r="1.9"/><circle cx="459.9" cy="798.8" r="1.9"/><circle cx="459.9" cy="807.7" r="1.9"/><circle cx="459.9" cy="816.6" r="1.9"/><circle cx="459.9" cy="825.5" r="1.9"/><circle cx="459.9" cy="834.3" r="1.9"/><circle cx="459.9" cy="843.2" r="1.9"/><circle cx="459.9" cy="852.1" r="1.9"/><circle cx="459.9" cy="861.0" r="1.9"/><circle cx="459.9" cy="869.9" r="1.9"/><circle cx="459.9" cy="878.8" r="1.9"/><circle cx="459.9" cy="887.7" r="1.9"/><circle cx="459.9" cy="896.5" r="1.9"/><circle cx="467.7" cy="780.3" r="1.9"/><circle cx="467.7" cy="789.2" r="1.9"/><circle cx="467.7" cy="798.0" r="1.9"/><circle cx="467.7" cy="806.9" r="1.9"/><circle cx="467.7" cy="815.7" r="1.9"/><circle cx="467.7" cy="824.6" r="1.9"/><circle cx="467.7" cy="833.5" r="1.9"/><circle cx="467.7" cy="842.3" r="1.9"/><circle cx="467.7" cy="851.2" r="1.9"/><circle cx="467.7" cy="860.0" r="1.9"/><circle cx="467.7" cy="868.9" r="1.9"/><circle cx="467.7" cy="877.8" r="1.9"/><circle cx="467.7" cy="886.6" r="1.9"/><circle cx="467.7" cy="895.5" r="1.9"/><circle cx="475.4" cy="779.6" r="1.9"/><circle cx="475.4" cy="788.4" r="1.9"/><circle cx="475.4" cy="797.3" r="1.9"/><circle cx="475.4" cy="806.1" r="1.9"/><circle cx="475.4" cy="814.9" r="1.9"/><circle cx="475.4" cy="823.8" r="1.9"/><circle cx="475.4" cy="832.6" r="1.9"/><circle cx="475.4" cy="841.4" r="1.9"/><circle cx="475.4" cy="850.2" r="1.9"/><circle cx="475.4" cy="859.1" r="1.9"/><circle cx="475.4" cy="867.9" r="1.9"/><circle cx="475.4" cy="876.7" r="1.9"/><circle cx="475.4" cy="885.6" r="1.9"/><circle cx="475.4" cy="894.4" r="1.9"/></g>
<circle cx="486.8" cy="836" r="2.9" fill="#818181"/>
<polygon points="260,493 267.2,493.3 267.2,940 260,937.8" fill="url(#gEdge)"/>
<polygon points="265.5,299.9 494.8,322.9 494.1,500 259.7,493.1 258.9,317.6 256.5,315.9 256.5,309" fill="#797979"/>
<g clip-path="url(#cHead)">
<polygon points="256,300 266.9,300 266.9,494 256,494" fill="#8e8e8e"/>
<path d="M266.9 299 V494" stroke="#262626" stroke-width="1.6"/>
<path d="M258 330.4 L267 331.2 L465.5 350.2 L495 352" stroke="#3a3a3a" stroke-width="1.5" fill="none"/>
<path d="M267 329.6 L465.5 348.6" stroke="#8a8a8a" stroke-width="1.2" fill="none" opacity="0.7"/>
<polygon points="476.3,323.2 495,323 495,500.2 409.9,497.6" fill="#181818"/>
<polygon points="300.1,356 470,376.6 470,482.5 300.5,474.3" fill="#717171" stroke="#626262" stroke-width="1"/>
<path d="M300.5 474.3 L470 482.5" stroke="#858585" stroke-width="1"/>
<polygon points="476.3,323.2 495,323 495,500.2 409.9,497.6" fill="#181818" opacity="0.975"/>
<polygon points="310.2,366.6 462,379.3 462.6,470.7 310.6,464.4" fill="#3a3a3a" stroke="#2a2a2a" stroke-width="1"/>
<path d="M462.3 379.6 L462.9 470.6" stroke="#707070" stroke-width="1"/>
<g clip-path="url(#cScreen)">
<polygon points="454,379 495,380 495,500 414,480" fill="#000" opacity="0.38"/>
<polygon points="310,366 319,367 319,466 310,465" fill="#2c2c2c"/>
<rect x="310.5" y="375" width="1.2" height="6" fill="#4a8fd0"/>
<rect x="313.6" y="378.5" width="2.4" height="2" fill="#c8c8c8" opacity="0.8"/>
<rect x="313.6" y="384.5" width="2.4" height="2" fill="#c8c8c8" opacity="0.8"/>
<rect x="313.6" y="390.6" width="2.4" height="2" fill="#c8c8c8" opacity="0.8"/>
<rect x="313.6" y="396.6" width="2.4" height="2" fill="#c8c8c8" opacity="0.8"/>
<rect x="313.6" y="403" width="2.4" height="2" fill="#c8c8c8" opacity="0.8"/>
<circle cx="314.6" cy="453.5" r="2.3" fill="none" stroke="#666" stroke-width="0.8"/><circle cx="314.6" cy="460.6" r="2.3" fill="#e0e0e0"/>
<path d="M320 372.4 L334 373.6" stroke="#9a9a9a" stroke-width="1.4"/><path d="M320.5 379.4 L333 380.5" stroke="#e0e0e0" stroke-width="1.6"/>
<rect x="428.5" y="386" width="15" height="4.6" fill="#d8d8d8" transform="rotate(4.8 436 388)"/>
<rect x="387.5" y="375.6" width="4.5" height="4" fill="#d0d0d0" opacity="0.85"/>
<rect x="322.3" y="394.6" width="8.6" height="3" rx="0.6" fill="#52b83c" transform="rotate(4.8 326.6 396.1)"/>
<rect x="333.3" y="395.5" width="8.6" height="3" rx="0.6" fill="#52b83c" transform="rotate(4.8 337.6 397.0)"/>
<rect x="344.3" y="396.5" width="8.6" height="3" rx="0.6" fill="#52b83c" transform="rotate(4.8 348.6 398.0)"/>
<rect x="322.3" y="401.0" width="8.6" height="3" rx="0.6" fill="#52b83c" transform="rotate(4.8 326.6 402.5)"/>
<rect x="333.3" y="401.9" width="8.6" height="3" rx="0.6" fill="#52b83c" transform="rotate(4.8 337.6 403.4)"/>
<rect x="344.3" y="402.9" width="8.6" height="3" rx="0.6" fill="#52b83c" transform="rotate(4.8 348.6 404.4)"/>
<rect x="322.3" y="407.3" width="8.6" height="3" rx="0.6" fill="#52b83c" transform="rotate(4.8 326.6 408.8)"/>
<rect x="333.3" y="408.2" width="8.6" height="3" rx="0.6" fill="#52b83c" transform="rotate(4.8 337.6 409.7)"/>
<rect x="344.3" y="409.2" width="8.6" height="3" rx="0.6" fill="#52b83c" transform="rotate(4.8 348.6 410.7)"/>
<rect x="322.3" y="413.7" width="8.6" height="3" rx="0.6" fill="#52b83c" transform="rotate(4.8 326.6 415.2)"/>
<rect x="333.3" y="414.6" width="8.6" height="3" rx="0.6" fill="#52b83c" transform="rotate(4.8 337.6 416.1)"/>
<rect x="344.3" y="415.6" width="8.6" height="3" rx="0.6" fill="#52b83c" transform="rotate(4.8 348.6 417.1)"/>
<path d="M322.6 387.1 l11 0.9 M322.6 390.7 l16 1.3" stroke="#a0a0a0" stroke-width="1" opacity="0.7"/>
<rect x="358.8" y="397.5" width="8.6" height="3" rx="0.6" fill="#52b83c" transform="rotate(4.8 363.1 399.0)"/>
<rect x="369.2" y="398.4" width="8.6" height="3" rx="0.6" fill="#52b83c" transform="rotate(4.8 373.5 399.9)"/>
<rect x="379.6" y="399.3" width="8.6" height="3" rx="0.6" fill="#52b83c" transform="rotate(4.8 383.9 400.8)"/>
<rect x="358.8" y="403.8" width="8.6" height="3" rx="0.6" fill="#52b83c" transform="rotate(4.8 363.1 405.3)"/>
<rect x="369.2" y="404.7" width="8.6" height="3" rx="0.6" fill="#e83030" transform="rotate(4.8 373.5 406.2)"/>
<rect x="379.6" y="405.6" width="8.6" height="3" rx="0.6" fill="#52b83c" transform="rotate(4.8 383.9 407.1)"/>
<rect x="358.8" y="410.2" width="8.6" height="3" rx="0.6" fill="#52b83c" transform="rotate(4.8 363.1 411.7)"/>
<rect x="369.2" y="411.1" width="8.6" height="3" rx="0.6" fill="#52b83c" transform="rotate(4.8 373.5 412.6)"/>
<rect x="379.6" y="412.0" width="8.6" height="3" rx="0.6" fill="#52b83c" transform="rotate(4.8 383.9 413.5)"/>
<rect x="358.8" y="416.0" width="8.6" height="3" rx="0.6" fill="#e8b030" transform="rotate(4.8 363.1 417.5)"/>
<rect x="369.2" y="416.9" width="8.6" height="3" rx="0.6" fill="#52b83c" transform="rotate(4.8 373.5 418.4)"/>
<rect x="379.6" y="417.8" width="8.6" height="3" rx="0.6" fill="#52b83c" transform="rotate(4.8 383.9 419.3)"/>
<path d="M359.1 390.0 l11 0.9 M359.1 393.6 l16 1.3" stroke="#a0a0a0" stroke-width="1" opacity="0.7"/>
<rect x="393.8" y="400.4" width="8.6" height="3" rx="0.6" fill="#52b83c" transform="rotate(4.8 398.1 401.9)"/>
<rect x="404.5" y="401.3" width="8.6" height="3" rx="0.6" fill="#52b83c" transform="rotate(4.8 408.8 402.8)"/>
<rect x="414.9" y="402.2" width="8.6" height="3" rx="0.6" fill="#52b83c" transform="rotate(4.8 419.2 403.7)"/>
<rect x="393.8" y="406.7" width="8.6" height="3" rx="0.6" fill="#52b83c" transform="rotate(4.8 398.1 408.2)"/>
<rect x="404.5" y="407.6" width="8.6" height="3" rx="0.6" fill="#5a5a5a" transform="rotate(4.8 408.8 409.1)"/>
<rect x="414.9" y="408.5" width="8.6" height="3" rx="0.6" fill="#52b83c" transform="rotate(4.8 419.2 410.0)"/>
<rect x="393.8" y="412.5" width="8.6" height="3" rx="0.6" fill="#e8b030" transform="rotate(4.8 398.1 414.0)"/>
<rect x="404.5" y="413.4" width="8.6" height="3" rx="0.6" fill="#52b83c" transform="rotate(4.8 408.8 414.9)"/>
<rect x="414.9" y="414.3" width="8.6" height="3" rx="0.6" fill="#52b83c" transform="rotate(4.8 419.2 415.8)"/>
<rect x="393.8" y="418.9" width="8.6" height="3" rx="0.6" fill="#e8b030" transform="rotate(4.8 398.1 420.4)"/>
<rect x="404.5" y="419.8" width="8.6" height="3" rx="0.6" fill="#52b83c" transform="rotate(4.8 408.8 421.3)"/>
<rect x="414.9" y="420.7" width="8.6" height="3" rx="0.6" fill="#52b83c" transform="rotate(4.8 419.2 422.2)"/>
<path d="M394.1 392.9 l11 0.9 M394.1 396.5 l16 1.3" stroke="#a0a0a0" stroke-width="1" opacity="0.7"/>
<rect x="427.6" y="403.3" width="8.6" height="3" rx="0.6" fill="#52b83c" transform="rotate(4.8 431.9 404.8)"/>
<rect x="438.1" y="404.2" width="8.6" height="3" rx="0.6" fill="#52b83c" transform="rotate(4.8 442.4 405.7)"/>
<rect x="447.9" y="405.0" width="8.6" height="3" rx="0.6" fill="#52b83c" transform="rotate(4.8 452.2 406.5)"/>
<rect x="427.6" y="409.1" width="8.6" height="3" rx="0.6" fill="#52b83c" transform="rotate(4.8 431.9 410.6)"/>
<rect x="438.1" y="410.0" width="8.6" height="3" rx="0.6" fill="#52b83c" transform="rotate(4.8 442.4 411.5)"/>
<rect x="447.9" y="410.8" width="8.6" height="3" rx="0.6" fill="#52b83c" transform="rotate(4.8 452.2 412.3)"/>
<rect x="427.6" y="414.8" width="8.6" height="3" rx="0.6" fill="#52b83c" transform="rotate(4.8 431.9 416.3)"/>
<rect x="438.1" y="415.7" width="8.6" height="3" rx="0.6" fill="#52b83c" transform="rotate(4.8 442.4 417.2)"/>
<rect x="447.9" y="416.5" width="8.6" height="3" rx="0.6" fill="#52b83c" transform="rotate(4.8 452.2 418.0)"/>
<rect x="427.6" y="420.6" width="8.6" height="3" rx="0.6" fill="#52b83c" transform="rotate(4.8 431.9 422.1)"/>
<rect x="438.1" y="421.5" width="8.6" height="3" rx="0.6" fill="#52b83c" transform="rotate(4.8 442.4 423.0)"/>
<rect x="447.9" y="422.3" width="8.6" height="3" rx="0.6" fill="#52b83c" transform="rotate(4.8 452.2 423.8)"/>
<path d="M427.9 395.8 l11 0.9 M427.9 399.4 l16 1.3" stroke="#a0a0a0" stroke-width="1" opacity="0.7"/>
<rect x="322.3" y="432.2" width="8.6" height="3" rx="0.6" fill="#52b83c" transform="rotate(4.8 326.6 433.7)"/>
<rect x="333.3" y="433.1" width="8.6" height="3" rx="0.6" fill="#52b83c" transform="rotate(4.8 337.6 434.6)"/>
<rect x="344.3" y="434.1" width="8.6" height="3" rx="0.6" fill="#52b83c" transform="rotate(4.8 348.6 435.6)"/>
<rect x="322.3" y="438.6" width="8.6" height="3" rx="0.6" fill="#52b83c" transform="rotate(4.8 326.6 440.1)"/>
<rect x="333.3" y="439.5" width="8.6" height="3" rx="0.6" fill="#5a5a5a" transform="rotate(4.8 337.6 441.0)"/>
<rect x="344.3" y="440.5" width="8.6" height="3" rx="0.6" fill="#52b83c" transform="rotate(4.8 348.6 442.0)"/>
<rect x="322.3" y="444.9" width="8.6" height="3" rx="0.6" fill="#e8b030" transform="rotate(4.8 326.6 446.4)"/>
<rect x="333.3" y="445.8" width="8.6" height="3" rx="0.6" fill="#52b83c" transform="rotate(4.8 337.6 447.3)"/>
<rect x="344.3" y="446.8" width="8.6" height="3" rx="0.6" fill="#52b83c" transform="rotate(4.8 348.6 448.3)"/>
<rect x="322.3" y="451.3" width="8.6" height="3" rx="0.6" fill="#e8b030" transform="rotate(4.8 326.6 452.8)"/>
<rect x="333.3" y="452.2" width="8.6" height="3" rx="0.6" fill="#52b83c" transform="rotate(4.8 337.6 453.7)"/>
<rect x="344.3" y="453.2" width="8.6" height="3" rx="0.6" fill="#52b83c" transform="rotate(4.8 348.6 454.7)"/>
<path d="M322.6 424.7 l11 0.9 M322.6 428.3 l16 1.3" stroke="#a0a0a0" stroke-width="1" opacity="0.7"/>
<rect x="358.8" y="434.5" width="8.6" height="3" rx="0.6" fill="#52b83c" transform="rotate(4.8 363.1 436.0)"/>
<rect x="369.2" y="435.4" width="8.6" height="3" rx="0.6" fill="#52b83c" transform="rotate(4.8 373.5 436.9)"/>
<rect x="379.6" y="436.3" width="8.6" height="3" rx="0.6" fill="#52b83c" transform="rotate(4.8 383.9 437.8)"/>
<rect x="358.8" y="440.9" width="8.6" height="3" rx="0.6" fill="#52b83c" transform="rotate(4.8 363.1 442.4)"/>
<rect x="369.2" y="441.8" width="8.6" height="3" rx="0.6" fill="#52b83c" transform="rotate(4.8 373.5 443.3)"/>
<rect x="379.6" y="442.7" width="8.6" height="3" rx="0.6" fill="#52b83c" transform="rotate(4.8 383.9 444.2)"/>
<rect x="358.8" y="447.3" width="8.6" height="3" rx="0.6" fill="#52b83c" transform="rotate(4.8 363.1 448.8)"/>
<rect x="369.2" y="448.2" width="8.6" height="3" rx="0.6" fill="#52b83c" transform="rotate(4.8 373.5 449.7)"/>
<rect x="379.6" y="449.1" width="8.6" height="3" rx="0.6" fill="#3a8fe0" transform="rotate(4.8 383.9 450.6)"/>
<rect x="358.8" y="453.0" width="8.6" height="3" rx="0.6" fill="#52b83c" transform="rotate(4.8 363.1 454.5)"/>
<rect x="369.2" y="453.9" width="8.6" height="3" rx="0.6" fill="#52b83c" transform="rotate(4.8 373.5 455.4)"/>
<rect x="379.6" y="454.8" width="8.6" height="3" rx="0.6" fill="#52b83c" transform="rotate(4.8 383.9 456.3)"/>
<path d="M359.1 427.0 l11 0.9 M359.1 430.6 l16 1.3" stroke="#a0a0a0" stroke-width="1" opacity="0.7"/>
<rect x="393.8" y="436.3" width="8.6" height="3" rx="0.6" fill="#52b83c" transform="rotate(4.8 398.1 437.8)"/>
<rect x="404.5" y="437.2" width="8.6" height="3" rx="0.6" fill="#52b83c" transform="rotate(4.8 408.8 438.7)"/>
<rect x="414.9" y="438.1" width="8.6" height="3" rx="0.6" fill="#52b83c" transform="rotate(4.8 419.2 439.6)"/>
<rect x="393.8" y="442.6" width="8.6" height="3" rx="0.6" fill="#52b83c" transform="rotate(4.8 398.1 444.1)"/>
<rect x="404.5" y="443.5" width="8.6" height="3" rx="0.6" fill="#5a5a5a" transform="rotate(4.8 408.8 445.0)"/>
<rect x="414.9" y="444.4" width="8.6" height="3" rx="0.6" fill="#52b83c" transform="rotate(4.8 419.2 445.9)"/>
<rect x="393.8" y="449.0" width="8.6" height="3" rx="0.6" fill="#52b83c" transform="rotate(4.8 398.1 450.5)"/>
<rect x="404.5" y="449.9" width="8.6" height="3" rx="0.6" fill="#52b83c" transform="rotate(4.8 408.8 451.4)"/>
<rect x="414.9" y="450.8" width="8.6" height="3" rx="0.6" fill="#52b83c" transform="rotate(4.8 419.2 452.3)"/>
<rect x="393.8" y="455.4" width="8.6" height="3" rx="0.6" fill="#52b83c" transform="rotate(4.8 398.1 456.9)"/>
<rect x="404.5" y="456.3" width="8.6" height="3" rx="0.6" fill="#52b83c" transform="rotate(4.8 408.8 457.8)"/>
<rect x="414.9" y="457.2" width="8.6" height="3" rx="0.6" fill="#52b83c" transform="rotate(4.8 419.2 458.7)"/>
<path d="M394.1 428.8 l11 0.9 M394.1 432.4 l16 1.3" stroke="#a0a0a0" stroke-width="1" opacity="0.7"/>
<circle cx="430.0" cy="439.5" r="1.1" fill="#222"/>
<circle cx="434.6" cy="439.9" r="1.1" fill="#222"/>
<circle cx="439.2" cy="440.3" r="1.1" fill="#222"/>
<circle cx="443.8" cy="440.7" r="1.1" fill="#222"/>
<circle cx="448.4" cy="441.1" r="1.1" fill="#222"/>
<circle cx="453.0" cy="441.5" r="1.1" fill="#222"/>
<circle cx="430.0" cy="445.1" r="1.1" fill="#222"/>
<circle cx="434.6" cy="445.5" r="1.1" fill="#222"/>
<circle cx="439.2" cy="445.9" r="1.1" fill="#222"/>
<circle cx="443.8" cy="446.3" r="1.1" fill="#222"/>
<circle cx="448.4" cy="446.7" r="1.1" fill="#222"/>
<circle cx="453.0" cy="447.1" r="1.1" fill="#222"/>
<circle cx="430.0" cy="450.7" r="1.1" fill="#222"/>
<circle cx="434.6" cy="451.1" r="1.1" fill="#222"/>
<circle cx="439.2" cy="451.5" r="1.1" fill="#222"/>
<circle cx="443.8" cy="451.9" r="1.1" fill="#222"/>
<circle cx="448.4" cy="452.3" r="1.1" fill="#222"/>
<circle cx="453.0" cy="452.7" r="1.1" fill="#222"/>
<circle cx="430.0" cy="456.3" r="1.1" fill="#222"/>
<circle cx="434.6" cy="456.7" r="1.1" fill="#222"/>
<circle cx="439.2" cy="457.1" r="1.1" fill="#222"/>
<circle cx="443.8" cy="457.5" r="1.1" fill="#222"/>
<circle cx="448.4" cy="457.9" r="1.1" fill="#222"/>
<circle cx="453.0" cy="458.3" r="1.1" fill="#222"/>
<path d="M428 430.5 l9 0.8 M428 434 l15 1.2" stroke="#a0a0a0" stroke-width="1" opacity="0.7"/>
<rect x="356.2" y="387.5" width="1.4" height="7" fill="#c03030"/><rect x="391.6" y="390" width="1.4" height="7" fill="#c89020"/><rect x="320.3" y="421.5" width="1.4" height="8" fill="#c89020"/>
<rect x="381.5" y="389.5" width="2.5" height="2.5" fill="#c89020"/><rect x="385.8" y="389.9" width="2.5" height="2.5" fill="#c03030"/><rect x="420" y="392.6" width="2.8" height="2.8" fill="#c89020"/>
<rect x="345.5" y="424" width="2.5" height="2.5" fill="#c89020"/><rect x="350" y="424.4" width="2.5" height="2.5" fill="#c89020"/>
<rect x="383" y="462" width="3" height="3" fill="#888"/><path d="M388.5 464 l10 0.7" stroke="#777" stroke-width="1.2"/>
</g>
</g>
<polygon points="265.5,299.9 494.4,322.9 494.1,500 259.9,493.1 258.9,317.6 256.7,315.9 256.7,309.2" fill="none" stroke="#f2f2f2" stroke-width="1.55" stroke-linejoin="miter"/>
<g style="filter:grayscale(1)" transform="translate(357.9,328.7) rotate(5.6)" font-family="Liberation Sans, sans-serif" font-weight="700" font-size="9.3" fill="#e8e8e8" stroke="#e8e8e8" stroke-width="0.25"><text x="0" y="0" textLength="36" lengthAdjust="spacingAndGlyphs">VERTEX</text><rect x="39" y="-8" width="0.9" height="10" fill="#a0a0a0"/><text x="43" y="0" textLength="19" lengthAdjust="spacingAndGlyphs">ONE</text></g>
<text style="filter:grayscale(1)" x="393.6" y="460.4" font-family="Liberation Sans, sans-serif" font-size="13.2" fill="#ffffff" textLength="26.8" lengthAdjust="spacingAndGlyphs">HMI</text>
<circle cx="445.1" cy="454.5" r="8.5" fill="#e8e8e8"/>
<circle cx="406.9" cy="626.7" r="23.4" fill="none" stroke="#e4e4e4" stroke-width="1.5"/>
<circle cx="406.9" cy="626.7" r="19.4" fill="#ffffff" opacity="0.55"/>
<circle cx="456.1" cy="874.6" r="23.5" fill="none" stroke="#e4e4e4" stroke-width="1.3"/>
<circle cx="456.1" cy="874.6" r="19.4" fill="#ffffff" opacity="0.52"/>
</svg>
<svg width="425" height="258" style="left:1409px;top:628px;overflow:hidden" viewBox="1409 628 425 258" fill="none" stroke-linecap="butt">
<path d="M1409 664.6 Q1411 663.8 1416 663.8 L1682.5 665.3 Q1692 665.6 1697.5 669.4" stroke="#9c9c9c" stroke-width="1.1"/>
<path d="M1697.5 669.4 V660 Q1697.5 656 1701.5 656 L1814.4 656.9 L1834 667" stroke="#9c9c9c" stroke-width="1.1"/>
<path d="M1697.5 669.4 L1714.5 715 Q1717 724 1705 727.6" stroke="#b0b0b0" stroke-width="0.9"/>
<path d="M1409 709.2 L1704.4 710.5 V730.6 H1730 V709.5 Q1730 705.6 1734 705.6 L1834 706.4" stroke="#c4c4c4" stroke-width="1"/>
<path d="M1727.5 730.6 V707 Q1727.5 703.4 1731.5 703.4 L1834 704" stroke="#c4c4c4" stroke-width="0.9"/>
<path d="M1733 660.4 L1800.6 661.3 L1803.8 663.8 L1736.3 663.5 Z" stroke="#c4c4c4" stroke-width="0.9"/>
<path d="M1834 689.8 L1761.9 689.4 L1765.6 692.5 L1834 693.1" stroke="#c4c4c4" stroke-width="0.9"/>
<path d="M1700.6 663.5 Q1700 660.2 1703.5 660.3 Q1706 660.4 1707.5 662.5 L1729.4 693.1 Q1724 694 1722.5 697.6 L1720 697.5 Z" stroke="#c4c4c4" stroke-width="0.9"/>
<path d="M1703 664 L1722.5 697.6" stroke="#d6d6d6" stroke-width="0.8"/>
<path d="M1409 736.2 L1834 739.2" stroke="#d6d6d6" stroke-width="1.1"/>
<path d="M1428.0 752.5 V742.6 Q1428.0 741.8 1428.8 741.8 H1429.6 Q1430.4 741.8 1430.4 742.6 V752.5 H1433.4 M1433.4 752.5 V742.6 Q1433.4 741.8 1434.2 741.8 H1435.0 Q1435.8 741.8 1435.8 742.6 V752.5 H1438.9 M1438.9 752.6 V742.6 Q1438.9 741.8 1439.7 741.8 H1440.5 Q1441.3 741.8 1441.3 742.6 V752.6 H1444.3 M1444.3 752.6 V742.6 Q1444.3 741.8 1445.1 741.8 H1445.9 Q1446.7 741.8 1446.7 742.6 V752.6 H1449.8 M1449.8 752.6 V742.7 Q1449.8 741.9 1450.6 741.9 H1451.4 Q1452.2 741.9 1452.2 742.7 V752.6 H1455.2 M1455.2 752.6 V742.7 Q1455.2 741.9 1456.0 741.9 H1456.8 Q1457.6 741.9 1457.6 742.7 V752.6 H1460.6 M1460.6 752.7 V742.7 Q1460.6 741.9 1461.4 741.9 H1462.2 Q1463.0 741.9 1463.0 742.7 V752.7 H1466.1 M1466.1 752.7 V742.7 Q1466.1 741.9 1466.9 741.9 H1467.7 Q1468.5 741.9 1468.5 742.7 V752.7 H1471.5 M1471.5 752.7 V742.7 Q1471.5 741.9 1472.3 741.9 H1473.1 Q1473.9 741.9 1473.9 742.7 V752.7 H1477.0 M1477.0 752.8 V742.8 Q1477.0 742.0 1477.8 742.0 H1478.6 Q1479.4 742.0 1479.4 742.8 V752.8 H1482.4 M1482.4 752.8 V742.8 Q1482.4 742.0 1483.2 742.0 H1484.0 Q1484.8 742.0 1484.8 742.8 V752.8 H1487.8 M1487.8 752.8 V742.8 Q1487.8 742.0 1488.6 742.0 H1489.4 Q1490.2 742.0 1490.2 742.8 V752.8 H1493.3 M1493.3 752.8 V742.8 Q1493.3 742.0 1494.1 742.0 H1494.9 Q1495.7 742.0 1495.7 742.8 V752.8 H1498.7 M1498.7 752.9 V742.8 Q1498.7 742.0 1499.5 742.0 H1500.3 Q1501.1 742.0 1501.1 742.8 V752.9 H1504.2 M1504.2 752.9 V742.9 Q1504.2 742.1 1505.0 742.1 H1505.8 Q1506.6 742.1 1506.6 742.9 V752.9 H1509.6 M1509.6 752.9 V742.9 Q1509.6 742.1 1510.4 742.1 H1511.2 Q1512.0 742.1 1512.0 742.9 V752.9 H1515.0 M1515.0 752.9 V742.9 Q1515.0 742.1 1515.8 742.1 H1516.6 Q1517.4 742.1 1517.4 742.9 V752.9 H1520.5 M1520.5 753.0 V742.9 Q1520.5 742.1 1521.3 742.1 H1522.1 Q1522.9 742.1 1522.9 742.9 V753.0 H1525.9 M1525.9 753.0 V742.9 Q1525.9 742.1 1526.7 742.1 H1527.5 Q1528.3 742.1 1528.3 742.9 V753.0 H1531.4 M1531.4 753.0 V743.0 Q1531.4 742.2 1532.2 742.2 H1533.0 Q1533.8 742.2 1533.8 743.0 V753.0 H1536.8" stroke="#c4c4c4" stroke-width="0.9"/>
<path d="M1539.4 753.2 V742.2 H1550.6 V753.3" stroke="#c4c4c4" stroke-width="0.9"/>
<path d="M1553.5 753.1 V743.0 Q1553.5 742.2 1554.3 742.2 H1555.1 Q1555.9 742.2 1555.9 743.0 V753.1 H1558.9 M1558.9 753.2 V743.1 Q1558.9 742.3 1559.7 742.3 H1560.5 Q1561.3 742.3 1561.3 743.1 V753.2 H1564.4 M1564.4 753.2 V743.1 Q1564.4 742.3 1565.2 742.3 H1566.0 Q1566.8 742.3 1566.8 743.1 V753.2 H1569.8 M1569.8 753.2 V743.1 Q1569.8 742.3 1570.6 742.3 H1571.4 Q1572.2 742.3 1572.2 743.1 V753.2 H1575.3 M1575.3 753.3 V743.1 Q1575.3 742.3 1576.1 742.3 H1576.9 Q1577.7 742.3 1577.7 743.1 V753.3 H1580.7 M1580.7 753.3 V743.1 Q1580.7 742.3 1581.5 742.3 H1582.3 Q1583.1 742.3 1583.1 743.1 V753.3 H1586.1 M1586.1 753.3 V743.2 Q1586.1 742.4 1586.9 742.4 H1587.7 Q1588.5 742.4 1588.5 743.2 V753.3 H1591.6 M1591.6 753.3 V743.2 Q1591.6 742.4 1592.4 742.4 H1593.2 Q1594.0 742.4 1594.0 743.2 V753.3 H1597.0 M1597.0 753.4 V743.2 Q1597.0 742.4 1597.8 742.4 H1598.6 Q1599.4 742.4 1599.4 743.2 V753.4 H1602.5 M1602.5 753.4 V743.2 Q1602.5 742.4 1603.3 742.4 H1604.1 Q1604.9 742.4 1604.9 743.2 V753.4 H1607.9 M1607.9 753.4 V743.2 Q1607.9 742.4 1608.7 742.4 H1609.5 Q1610.3 742.4 1610.3 743.2 V753.4 H1613.3 M1613.3 753.5 V743.3 Q1613.3 742.5 1614.1 742.5 H1614.9 Q1615.7 742.5 1615.7 743.3 V753.5 H1618.8 M1618.8 753.5 V743.3 Q1618.8 742.5 1619.6 742.5 H1620.4 Q1621.2 742.5 1621.2 743.3 V753.5 H1624.2 M1624.2 753.5 V743.3 Q1624.2 742.5 1625.0 742.5 H1625.8 Q1626.6 742.5 1626.6 743.3 V753.5 H1629.7 M1629.7 753.5 V743.3 Q1629.7 742.5 1630.5 742.5 H1631.3 Q1632.1 742.5 1632.1 743.3 V753.5 H1635.1 M1635.1 753.6 V743.4 Q1635.1 742.6 1635.9 742.6 H1636.7 Q1637.5 742.6 1637.5 743.4 V753.6 H1640.5 M1640.5 753.6 V743.4 Q1640.5 742.6 1641.3 742.6 H1642.1 Q1642.9 742.6 1642.9 743.4 V753.6 H1646.0 M1646.0 753.6 V743.4 Q1646.0 742.6 1646.8 742.6 H1647.6 Q1648.4 742.6 1648.4 743.4 V753.6 H1651.4 M1651.4 753.7 V743.4 Q1651.4 742.6 1652.2 742.6 H1653.0 Q1653.8 742.6 1653.8 743.4 V753.7 H1656.9 M1656.9 753.7 V743.4 Q1656.9 742.6 1657.7 742.6 H1658.5 Q1659.3 742.6 1659.3 743.4 V753.7 H1662.3" stroke="#c4c4c4" stroke-width="0.9"/>
<path d="M1661.9 753.9 V742.9 H1673.1 V754" stroke="#c4c4c4" stroke-width="0.9"/>
<path d="M1676.0 753.8 V743.5 Q1676.0 742.7 1676.8 742.7 H1677.6 Q1678.4 742.7 1678.4 743.5 V753.8 H1681.4 M1681.4 753.8 V743.5 Q1681.4 742.7 1682.2 742.7 H1683.0 Q1683.8 742.7 1683.8 743.5 V753.8 H1686.9 M1686.9 753.8 V743.5 Q1686.9 742.7 1687.7 742.7 H1688.5 Q1689.3 742.7 1689.3 743.5 V753.8 H1692.3 M1692.3 753.9 V743.6 Q1692.3 742.8 1693.1 742.8 H1693.9 Q1694.7 742.8 1694.7 743.6 V753.9 H1697.8 M1697.8 753.9 V743.6 Q1697.8 742.8 1698.6 742.8 H1699.4 Q1700.2 742.8 1700.2 743.6 V753.9 H1703.2 M1703.2 753.9 V743.6 Q1703.2 742.8 1704.0 742.8 H1704.8 Q1705.6 742.8 1705.6 743.6 V753.9 H1708.6 M1708.6 754.0 V743.6 Q1708.6 742.8 1709.4 742.8 H1710.2 Q1711.0 742.8 1711.0 743.6 V754.0 H1714.1 M1714.1 754.0 V743.6 Q1714.1 742.8 1714.9 742.8 H1715.7 Q1716.5 742.8 1716.5 743.6 V754.0 H1719.5 M1719.5 754.0 V743.7 Q1719.5 742.9 1720.3 742.9 H1721.1 Q1721.9 742.9 1721.9 743.7 V754.0 H1725.0 M1725.0 754.0 V743.7 Q1725.0 742.9 1725.8 742.9 H1726.6 Q1727.4 742.9 1727.4 743.7 V754.0 H1730.4 M1730.4 754.1 V743.7 Q1730.4 742.9 1731.2 742.9 H1732.0 Q1732.8 742.9 1732.8 743.7 V754.1 H1735.8 M1735.8 754.1 V743.7 Q1735.8 742.9 1736.6 742.9 H1737.4 Q1738.2 742.9 1738.2 743.7 V754.1 H1741.3 M1741.3 754.1 V743.8 Q1741.3 743.0 1742.1 743.0 H1742.9 Q1743.7 743.0 1743.7 743.8 V754.1 H1746.7 M1746.7 754.1 V743.8 Q1746.7 743.0 1747.5 743.0 H1748.3 Q1749.1 743.0 1749.1 743.8 V754.1 H1752.2 M1752.2 754.2 V743.8 Q1752.2 743.0 1753.0 743.0 H1753.8 Q1754.6 743.0 1754.6 743.8 V754.2 H1757.6 M1757.6 754.2 V743.8 Q1757.6 743.0 1758.4 743.0 H1759.2 Q1760.0 743.0 1760.0 743.8 V754.2 H1763.0 M1763.0 754.2 V743.8 Q1763.0 743.0 1763.8 743.0 H1764.6 Q1765.4 743.0 1765.4 743.8 V754.2 H1768.5 M1768.5 754.3 V743.9 Q1768.5 743.1 1769.3 743.1 H1770.1 Q1770.9 743.1 1770.9 743.9 V754.3 H1773.9 M1773.9 754.3 V743.9 Q1773.9 743.1 1774.7 743.1 H1775.5 Q1776.3 743.1 1776.3 743.9 V754.3 H1779.4 M1779.4 754.3 V743.9 Q1779.4 743.1 1780.2 743.1 H1781.0 Q1781.8 743.1 1781.8 743.9 V754.3 H1784.8" stroke="#c4c4c4" stroke-width="0.9"/>
<path d="M1428 752.4 V742 H1424 L1418.5 747.5 M1420.8 745.2 L1426 750.2 M1415 750 L1422 757.5 M1411.5 753.5 L1419 761.5 M1409 757.5 L1415.5 764.5" stroke="#c4c4c4" stroke-width="0.9"/>
<path d="M1409 768 L1426.5 755.2" stroke="#c4c4c4" stroke-width="0.9"/>
<path d="M1785 754.5 V744.3 Q1789 744 1792.5 747.5 L1788.5 751.5 M1796 750.5 L1788.5 758 M1799.5 754.5 L1792.5 761.5 M1803.5 758 L1796.5 765 M1807.5 762.5 L1800.5 769 Q1812 764 1814.5 770 L1815.5 774.5 L1806.5 773.5" stroke="#c4c4c4" stroke-width="0.9"/>
<path d="M1811 777.5 L1803.5 779.5 M1813.5 782.5 L1805 785 M1812 789 L1803.5 787.5 L1801.5 792.5 L1809 795.5" stroke="#c4c4c4" stroke-width="0.9"/>
<path d="M1426 754.8 L1785 757.2 L1806.3 777.5 L1801.3 792.5 L1432 789.6 L1412 790 L1409 780" stroke="#c4c4c4" stroke-width="1"/>
<path d="M1426 756.4 L1784.4 758.8" stroke="#d6d6d6" stroke-width="0.9"/>
<path d="M1790.5 793.4 h3.5 v1.6 M1420 791.5 h3.5 v1.6" stroke="#c4c4c4" stroke-width="0.8"/>
<circle cx="1428.8" cy="759.8" r="3.3" stroke="#a8a8a8" stroke-width="1.3"/><circle cx="1428.8" cy="759.8" r="1.3" stroke="#b8b8b8" stroke-width="0.8"/>
<circle cx="1605.9" cy="761" r="3.3" stroke="#a8a8a8" stroke-width="1.3"/><circle cx="1605.9" cy="761" r="1.3" stroke="#b8b8b8" stroke-width="0.8"/>
<circle cx="1783.1" cy="762.8" r="3.3" stroke="#a8a8a8" stroke-width="1.3"/><circle cx="1783.1" cy="762.8" r="1.3" stroke="#b8b8b8" stroke-width="0.8"/>
<path d="M1564.7 771.2 H1587.7 Q1590.7 771.2 1590.0 774.5 L1588.4 781.3 Q1587.8 783.8 1585.2 783.8 H1567.2 Q1564.6 783.8 1564.0 781.3 L1562.4 774.5 Q1561.7 771.2 1564.7 771.2 Z" stroke="#c4c4c4" stroke-width="1"/><path d="M1566.7 772.9 H1585.7 Q1588.2 772.9 1587.6 775.5 L1586.4 780.3 Q1585.8 782.1 1583.8 782.1 H1568.6 Q1566.6 782.1 1566.0 780.3 L1564.8 775.5 Q1564.2 772.9 1566.7 772.9 Z" stroke="#d6d6d6" stroke-width="0.8"/><circle cx="1559.9" cy="777.5" r="3" stroke="#c4c4c4" stroke-width="1"/><circle cx="1592.5" cy="777.5" r="3" stroke="#c4c4c4" stroke-width="1"/><circle cx="1570.2" cy="776.1" r="0.45" fill="#c4c4c4" stroke="none"/><circle cx="1573.2" cy="776.1" r="0.45" fill="#c4c4c4" stroke="none"/><circle cx="1576.2" cy="776.1" r="0.45" fill="#c4c4c4" stroke="none"/><circle cx="1579.2" cy="776.1" r="0.45" fill="#c4c4c4" stroke="none"/><circle cx="1582.2" cy="776.1" r="0.45" fill="#c4c4c4" stroke="none"/><circle cx="1571.7" cy="779.1" r="0.45" fill="#c4c4c4" stroke="none"/><circle cx="1574.7" cy="779.1" r="0.45" fill="#c4c4c4" stroke="none"/><circle cx="1577.7" cy="779.1" r="0.45" fill="#c4c4c4" stroke="none"/><circle cx="1580.7" cy="779.1" r="0.45" fill="#c4c4c4" stroke="none"/>
<path d="M1606.3 771.5 H1629.3 Q1632.3 771.5 1631.6 774.8 L1630.0 781.6 Q1629.4 784.1 1626.8 784.1 H1608.8 Q1606.2 784.1 1605.6 781.6 L1604.0 774.8 Q1603.3 771.5 1606.3 771.5 Z" stroke="#c4c4c4" stroke-width="1"/><path d="M1608.3 773.2 H1627.3 Q1629.8 773.2 1629.2 775.8 L1628.0 780.6 Q1627.4 782.4 1625.4 782.4 H1610.2 Q1608.2 782.4 1607.6 780.6 L1606.4 775.8 Q1605.8 773.2 1608.3 773.2 Z" stroke="#d6d6d6" stroke-width="0.8"/><circle cx="1601.5" cy="777.8" r="3" stroke="#c4c4c4" stroke-width="1"/><circle cx="1634.1" cy="777.8" r="3" stroke="#c4c4c4" stroke-width="1"/><circle cx="1611.8" cy="776.4" r="0.45" fill="#c4c4c4" stroke="none"/><circle cx="1614.8" cy="776.4" r="0.45" fill="#c4c4c4" stroke="none"/><circle cx="1617.8" cy="776.4" r="0.45" fill="#c4c4c4" stroke="none"/><circle cx="1620.8" cy="776.4" r="0.45" fill="#c4c4c4" stroke="none"/><circle cx="1623.8" cy="776.4" r="0.45" fill="#c4c4c4" stroke="none"/><circle cx="1613.3" cy="779.4" r="0.45" fill="#c4c4c4" stroke="none"/><circle cx="1616.3" cy="779.4" r="0.45" fill="#c4c4c4" stroke="none"/><circle cx="1619.3" cy="779.4" r="0.45" fill="#c4c4c4" stroke="none"/><circle cx="1622.3" cy="779.4" r="0.45" fill="#c4c4c4" stroke="none"/>
<path d="M1715.4 772.1 H1738.4 Q1741.4 772.1 1740.7 775.4 L1739.1 782.2 Q1738.5 784.7 1735.9 784.7 H1717.9 Q1715.3 784.7 1714.7 782.2 L1713.1 775.4 Q1712.4 772.1 1715.4 772.1 Z" stroke="#c4c4c4" stroke-width="1"/><path d="M1717.4 773.8 H1736.4 Q1738.9 773.8 1738.3 776.4 L1737.1 781.2 Q1736.5 783.0 1734.5 783.0 H1719.3 Q1717.3 783.0 1716.7 781.2 L1715.5 776.4 Q1714.9 773.8 1717.4 773.8 Z" stroke="#d6d6d6" stroke-width="0.8"/><circle cx="1710.6" cy="778.4" r="3" stroke="#c4c4c4" stroke-width="1"/><circle cx="1743.2" cy="778.4" r="3" stroke="#c4c4c4" stroke-width="1"/><circle cx="1720.9" cy="777.0" r="0.45" fill="#c4c4c4" stroke="none"/><circle cx="1723.9" cy="777.0" r="0.45" fill="#c4c4c4" stroke="none"/><circle cx="1726.9" cy="777.0" r="0.45" fill="#c4c4c4" stroke="none"/><circle cx="1729.9" cy="777.0" r="0.45" fill="#c4c4c4" stroke="none"/><circle cx="1732.9" cy="777.0" r="0.45" fill="#c4c4c4" stroke="none"/><circle cx="1722.4" cy="780.0" r="0.45" fill="#c4c4c4" stroke="none"/><circle cx="1725.4" cy="780.0" r="0.45" fill="#c4c4c4" stroke="none"/><circle cx="1728.4" cy="780.0" r="0.45" fill="#c4c4c4" stroke="none"/><circle cx="1731.4" cy="780.0" r="0.45" fill="#c4c4c4" stroke="none"/>
<path d="M1757.9 772.5 H1780.9 Q1783.9 772.5 1783.2 775.8 L1781.6 782.6 Q1781.0 785.1 1778.4 785.1 H1760.4 Q1757.8 785.1 1757.2 782.6 L1755.6 775.8 Q1754.9 772.5 1757.9 772.5 Z" stroke="#c4c4c4" stroke-width="1"/><path d="M1759.9 774.2 H1778.9 Q1781.4 774.2 1780.8 776.8 L1779.6 781.6 Q1779.0 783.4 1777.0 783.4 H1761.8 Q1759.8 783.4 1759.2 781.6 L1758.0 776.8 Q1757.4 774.2 1759.9 774.2 Z" stroke="#d6d6d6" stroke-width="0.8"/><circle cx="1753.1" cy="778.8" r="3" stroke="#c4c4c4" stroke-width="1"/><circle cx="1785.7" cy="778.8" r="3" stroke="#c4c4c4" stroke-width="1"/><circle cx="1763.4" cy="777.4" r="0.45" fill="#c4c4c4" stroke="none"/><circle cx="1766.4" cy="777.4" r="0.45" fill="#c4c4c4" stroke="none"/><circle cx="1769.4" cy="777.4" r="0.45" fill="#c4c4c4" stroke="none"/><circle cx="1772.4" cy="777.4" r="0.45" fill="#c4c4c4" stroke="none"/><circle cx="1775.4" cy="777.4" r="0.45" fill="#c4c4c4" stroke="none"/><circle cx="1764.9" cy="780.4" r="0.45" fill="#c4c4c4" stroke="none"/><circle cx="1767.9" cy="780.4" r="0.45" fill="#c4c4c4" stroke="none"/><circle cx="1770.9" cy="780.4" r="0.45" fill="#c4c4c4" stroke="none"/><circle cx="1773.9" cy="780.4" r="0.45" fill="#c4c4c4" stroke="none"/>
<rect x="1481.3" y="763.5" width="16.2" height="17.1" stroke="#c4c4c4" stroke-width="0.9"/><rect x="1483.8999999999999" y="765.1" width="11.0" height="2.6" rx="0.8" stroke="#c4c4c4" stroke-width="0.8"/><path d="M1483.3 770.8 H1495.5 M1483.3 773.2 H1495.5" stroke="#d6d6d6" stroke-width="0.8"/><rect x="1483.8999999999999" y="774.8" width="11.0" height="2.6" rx="0.8" stroke="#c4c4c4" stroke-width="0.8"/>
<rect x="1645" y="764.4" width="16.0" height="17.5" stroke="#c4c4c4" stroke-width="0.9"/><rect x="1647.6" y="766.0" width="10.8" height="2.6" rx="0.8" stroke="#c4c4c4" stroke-width="0.8"/><path d="M1647 771.9 H1659 M1647 774.4 H1659" stroke="#d6d6d6" stroke-width="0.8"/><rect x="1647.6" y="775.9" width="10.8" height="2.6" rx="0.8" stroke="#c4c4c4" stroke-width="0.8"/>
<path d="M1460 763.2 H1476.9 V780.6 H1468" stroke="#c4c4c4" stroke-width="0.9"/>
<path d="M1503.6 765 Q1503.6 762 1507 762 H1510.6 V781.2 H1507 Q1503.6 781.2 1503.6 778.4 Z" stroke="#c4c4c4" stroke-width="0.9"/><path d="M1506 765 L1508.8 767 V776.5 L1506 778.5 Z" stroke="#d6d6d6" stroke-width="0.8"/>
<rect x="1513.8" y="765" width="39.3" height="18.1" stroke="#d6d6d6" stroke-width="0.9"/>
<rect x="1665.3" y="766.5" width="39.7" height="17.9" stroke="#c4c4c4" stroke-width="0.9"/>
<path d="M1669.0 770.0 H1684.0 V779.2 H1681.0 V781.0 H1679.2 V782.4 H1673.8 V781.0 H1672.0 V779.2 H1669.0 Z" stroke="#c4c4c4" stroke-width="0.9" stroke-linejoin="round"/>
<path d="M1686.3 770.2 H1701.9 V779.4 H1698.8 V781.2 H1696.9 V782.6 H1691.3 V781.2 H1689.4 V779.4 H1686.3 Z" stroke="#c4c4c4" stroke-width="0.9" stroke-linejoin="round"/>
<path d="M1669.5 783 h4 M1679.5 783 h4 M1687 783.2 h4 M1697 783.2 h4" stroke="#c4c4c4" stroke-width="0.9"/>
<path d="M1440 768 Q1447 762 1453 766 M1433 776 Q1438 768 1448 770 L1459 766 L1476.8 763.5 L1470 776 L1460 782 L1452 781.5 M1433 776 L1428 790 M1428.5 790 Q1418 810 1417 834 M1433.5 797 Q1424 815 1422.5 834 M1452 781.5 Q1447 786 1443.5 792 L1426 833 M1457 784 Q1452 790 1449 797 L1431 833 M1438.5 771.5 L1433.5 788 Q1431 796 1436 799" stroke="#c4c4c4" stroke-width="0.9"/>
<path d="M1429 783 Q1433 779.5 1440 782 Q1444 785 1441 792 M1425.5 796 Q1432 792 1437 797" stroke="#d6d6d6" stroke-width="0.9"/>
<path d="M1533.5 782 Q1522 800 1520 834 M1541 781 Q1529 802 1527.5 834" stroke="#c4c4c4" stroke-width="0.9"/>
<g style="filter:grayscale(1)" font-family="Liberation Sans, sans-serif" font-size="3.6" fill="#9a9a9a" stroke="none" font-weight="700">
<text x="1462.5" y="789.9" textLength="11.2" lengthAdjust="spacingAndGlyphs">USB1/2</text>
<text x="1483" y="790.0" textLength="12" lengthAdjust="spacingAndGlyphs">USB3/4</text>
<text x="1502" y="790.1" textLength="8.6" lengthAdjust="spacingAndGlyphs">HDMI</text>
<text x="1522" y="790.1" textLength="6.8" lengthAdjust="spacingAndGlyphs">LAN1</text>
<text x="1537" y="790.2" textLength="8.6" lengthAdjust="spacingAndGlyphs">LAN2</text>
<text x="1570.6" y="790.3" textLength="8.8" lengthAdjust="spacingAndGlyphs">COM1</text>
<text x="1613.8" y="790.5" textLength="9" lengthAdjust="spacingAndGlyphs">COM2</text>
<text x="1647" y="790.6" textLength="11.5" lengthAdjust="spacingAndGlyphs">USB5/6</text>
<text x="1672" y="790.7" textLength="8.6" lengthAdjust="spacingAndGlyphs">LAN3</text>
<text x="1689" y="790.8" textLength="8.7" lengthAdjust="spacingAndGlyphs">LAN4</text>
<text x="1721.5" y="790.9" textLength="9.7" lengthAdjust="spacingAndGlyphs">COM3</text>
<text x="1766" y="791.1" textLength="9.6" lengthAdjust="spacingAndGlyphs">COM4</text>
</g>
<path d="M1417.3 781.5 v3.6 M1414.8 785.2 h5 M1415.7 786.6 h3.2 M1416.6 788 h1.4" stroke="#b8b8b8" stroke-width="0.8"/>
<path d="M1409 821.8 L1834 820.8" stroke="#cccccc" stroke-width="1"/>
<path d="M1409 823 L1834 822" stroke="#e2e2e2" stroke-width="1"/>
<path d="M1409 834.4 L1834 833" stroke="#d0d0d0" stroke-width="1"/>
<path d="M1409 844.4 L1834 843.6" stroke="#d0d0d0" stroke-width="1"/>
<path d="M1409 849.8 L1834 848.6" stroke="#dcdcdc" stroke-width="1"/>
<path d="M1409 877 L1834 876.4" stroke="#bcbcbc" stroke-width="1"/>
<path d="M1517.7 768.7 H1532.2 V777.6 H1529.3 V779.4 H1527.6 V780.8 H1522.3 V779.4 H1520.6 V777.6 H1517.7 Z" stroke="#1a1a1a" stroke-width="1.6" stroke-linejoin="round"/>
<path d="M1534.3 768.7 H1549.3 V777.6 H1546.3 V779.4 H1544.5 V780.8 H1539.1 V779.4 H1537.3 V777.6 H1534.3 Z" stroke="#1a1a1a" stroke-width="1.6" stroke-linejoin="round"/>
<path d="M1423.7 780.6 V886 M1521.5 772.5 V886 M1543.5 772.5 V886" stroke="#303030" stroke-width="1.25"/>
<circle cx="1424.6" cy="777.7" r="2.9" stroke="#111111" stroke-width="1.2" fill="#ffffff"/>
</svg>
<div id="txt" style="position:absolute;left:0;top:0;width:1920px;height:1080px;filter:grayscale(1);">
<span class="t" style="left:182.8px;top:25.4px;font-size:24px;font-weight:400;color:#f0f0f0;letter-spacing:0.000px;transform:scaleX(1.0395);">Vertex One</span>
<span class="t" style="left:326.5px;top:31.4px;font-size:17px;font-weight:400;color:#f0f0f0;letter-spacing:0.000px;transform:scaleX(1.0268);">2025.07.15</span>
<span class="t" style="left:425.5px;top:31.4px;font-size:17px;font-weight:400;color:#f0f0f0;letter-spacing:0.000px;transform:scaleX(1.0253);">Mon 14:00</span>
<span class="t" style="left:173.5px;top:91.4px;font-size:35px;font-weight:400;color:#ffffff;letter-spacing:0.355px;transform:scaleX(1.0850);">Diagnostics</span>
<span class="t" style="left:576.1px;top:166.4px;font-size:23.6px;font-weight:400;color:#ffffff;letter-spacing:0.404px;transform:scaleX(1.0850);-webkit-text-stroke:0.35px currentColor;filter:contrast(1.001);">HMI Communications</span>
<span class="t" style="left:599.6px;top:224.4px;font-size:17.8px;font-weight:700;color:#ececec;letter-spacing:0.000px;transform:scaleX(1.0437);">Communications</span>
<span class="t" style="left:1428.8px;top:235.4px;font-size:19.4px;font-weight:400;color:#f0f0f0;letter-spacing:0.000px;transform:scaleX(1.0795);">Profile ID</span>
<span class="t" style="left:1428.8px;top:278.4px;font-size:14.7px;font-weight:400;color:#f0f0f0;letter-spacing:0.401px;transform:scaleX(1.0850);-webkit-text-stroke:0.42px currentColor;">Date Created</span>
<span class="t" style="left:1428.8px;top:340.4px;font-size:14.7px;font-weight:400;color:#f0f0f0;letter-spacing:0.732px;transform:scaleX(1.0850);-webkit-text-stroke:0.42px currentColor;">Date Modified</span>
<span class="t" style="left:1428.8px;top:402.4px;font-size:14.7px;font-weight:400;color:#f0f0f0;letter-spacing:0.600px;transform:scaleX(1.0850);-webkit-text-stroke:0.42px currentColor;">AZ configurations</span>
<span class="t" style="left:1428.8px;top:464.4px;font-size:14.7px;font-weight:400;color:#f0f0f0;letter-spacing:0.707px;transform:scaleX(1.0850);-webkit-text-stroke:0.42px currentColor;">Event Notifications</span>
<span class="t" style="left:1428.8px;top:526.4px;font-size:14.7px;font-weight:400;color:#f0f0f0;letter-spacing:0.640px;transform:scaleX(1.0850);-webkit-text-stroke:0.42px currentColor;">Login Idle</span>
<span class="t" style="left:1722.7px;top:277.4px;font-size:16px;font-weight:400;color:#f0f0f0;letter-spacing:0.000px;transform:scaleX(1.0800);">08.26.2025</span>
<span class="t" style="left:1722.7px;top:339.4px;font-size:16px;font-weight:400;color:#f0f0f0;letter-spacing:0.000px;transform:scaleX(1.0800);">08.31.2025</span>
<span class="t" style="left:1800.2px;top:401.4px;font-size:16px;font-weight:400;color:#f0f0f0;letter-spacing:0.000px;transform:scaleX(1.0000);">8</span>
<span class="t" style="left:1746.0px;top:463.4px;font-size:16px;font-weight:400;color:#f0f0f0;letter-spacing:0.000px;transform:scaleX(1.0807);">Enabled</span>
<span class="t" style="left:1746.0px;top:525.4px;font-size:16px;font-weight:400;color:#f0f0f0;letter-spacing:0.000px;transform:scaleX(1.0807);">Enabled</span>
<span class="t" style="left:599.7px;top:655.4px;font-size:19.4px;font-weight:400;color:#f0f0f0;letter-spacing:0.158px;transform:scaleX(1.0850);">Recommendations</span>
<span class="t" style="left:599.0px;top:682.4px;font-size:13.8px;font-weight:400;color:#f0f0f0;letter-spacing:0.000px;transform:scaleX(1.0837);-webkit-text-stroke:0.42px currentColor;">Best Practice</span>
<span class="t" style="left:619.8px;top:705.4px;font-size:14px;font-weight:400;color:#ececec;letter-spacing:0.000px;transform:scaleX(1.0423);">Use Chrome browser v93.0.xx or later for remote HMI access.</span>
<span class="t" style="left:619.8px;top:729.4px;font-size:14px;font-weight:400;color:#ececec;letter-spacing:0.000px;transform:scaleX(1.0626);">HTTPS connections require certificate acceptance</span>
<span class="t" style="left:619.8px;top:753.4px;font-size:14px;font-weight:400;color:#ececec;letter-spacing:0.000px;transform:scaleX(1.0742);">Do not connect the HMI to the internet</span>
<span class="t" style="left:619.8px;top:777.4px;font-size:14px;font-weight:400;color:#ececec;letter-spacing:0.000px;transform:scaleX(1.0506);">Router with IPSec or Peer-to-Peer (P2P) networking</span>
<span class="t" style="left:619.8px;top:801.4px;font-size:14px;font-weight:400;color:#ececec;letter-spacing:0.000px;transform:scaleX(1.0750);">recommended</span>
<span class="t" style="left:619.8px;top:825.4px;font-size:14px;font-weight:400;color:#ececec;letter-spacing:0.000px;transform:scaleX(1.0419);">Access control is managed via user roles; elevated permissions</span>
<span class="t" style="left:619.8px;top:849.4px;font-size:14px;font-weight:400;color:#ececec;letter-spacing:0.000px;transform:scaleX(1.0765);">are required for configuration and maintenance.</span>
<span class="t" style="left:1035.7px;top:682.4px;font-size:13.8px;font-weight:400;color:#f0f0f0;letter-spacing:0.173px;transform:scaleX(1.0850);-webkit-text-stroke:0.42px currentColor;">Indicators that suggest replacement</span>
<span class="t" style="left:1057.6px;top:705.4px;font-size:14px;font-weight:400;color:#ececec;letter-spacing:0.000px;transform:scaleX(1.0358);">A frozen screen can mean power surges,</span>
<span class="t" style="left:1057.6px;top:729.4px;font-size:14px;font-weight:400;color:#ececec;letter-spacing:0.000px;transform:scaleX(1.0843);">improper shutdowns, or file corruption.</span>
<span class="t" style="left:1057.6px;top:753.4px;font-size:14px;font-weight:400;color:#ececec;letter-spacing:0.000px;transform:scaleX(1.0700);">Fault 108 could be failedcomms between</span>
<span class="t" style="left:1057.6px;top:777.4px;font-size:14px;font-weight:400;color:#ececec;letter-spacing:0.000px;transform:scaleX(1.0565);">analyzer and PC is interrupted.</span>
<span class="t" style="left:1057.6px;top:801.4px;font-size:14px;font-weight:400;color:#ececec;letter-spacing:0.000px;transform:scaleX(1.0678);">Fault 128 could be driver load failure or</span>
<span class="t" style="left:1057.6px;top:825.4px;font-size:14px;font-weight:400;color:#ececec;letter-spacing:0.000px;transform:scaleX(1.0540);">electronic issue.</span>
<span class="t" style="left:1057.6px;top:849.4px;font-size:14px;font-weight:400;color:#ececec;letter-spacing:0.000px;transform:scaleX(1.0679);">Fault 234 could be Hardware failure.</span>
<span class="t" style="left:625.8px;top:571.4px;font-size:16.5px;font-weight:400;color:#ececec;letter-spacing:0.000px;transform:scaleX(0.9667);">Az 1</span>
<span class="t" style="left:708.8px;top:570.4px;font-size:16.5px;font-weight:400;color:#ececec;letter-spacing:0.000px;transform:scaleX(0.9924);">Az 2</span>
<span class="t" style="left:791.5px;top:570.4px;font-size:16.5px;font-weight:400;color:#ececec;letter-spacing:0.000px;transform:scaleX(0.9970);">Az 3</span>
<span class="t" style="left:893.5px;top:572.4px;font-size:16.5px;font-weight:400;color:#a0a0a0;letter-spacing:0.000px;transform:scaleX(1.0121);">Az 4</span>
<span class="t" style="left:995.8px;top:570.4px;font-size:16.5px;font-weight:400;color:#ececec;letter-spacing:0.000px;transform:scaleX(0.9985);">Az 5</span>
<span class="t" style="left:1078.3px;top:570.4px;font-size:16.5px;font-weight:400;color:#ececec;letter-spacing:0.000px;transform:scaleX(1.0121);">Az 6</span>
<span class="t" style="left:1161.5px;top:571.4px;font-size:16.5px;font-weight:400;color:#ececec;letter-spacing:0.000px;transform:scaleX(0.9636);">Az 7</span>
<span class="t" style="left:1244.4px;top:570.4px;font-size:16.5px;font-weight:400;color:#a0a0a0;letter-spacing:0.000px;transform:scaleX(0.9879);">Az 8</span>
<span class="t" style="left:28.6px;top:1026.4px;font-size:20.6px;font-weight:400;color:#0a0a0a;letter-spacing:0.000px;transform:scaleX(0.9529);-webkit-text-stroke:0.3px #0a0a0a;">HW</span>
</div>
<span class="t" style="left:869.5px;top:170.4px;font-size:13.5px;font-weight:400;color:#62c0fa;letter-spacing:0.172px;transform:scaleX(1.0850);-webkit-text-stroke:0.35px currentColor;filter:contrast(1.001);">Back to main</span>
</body></html>
